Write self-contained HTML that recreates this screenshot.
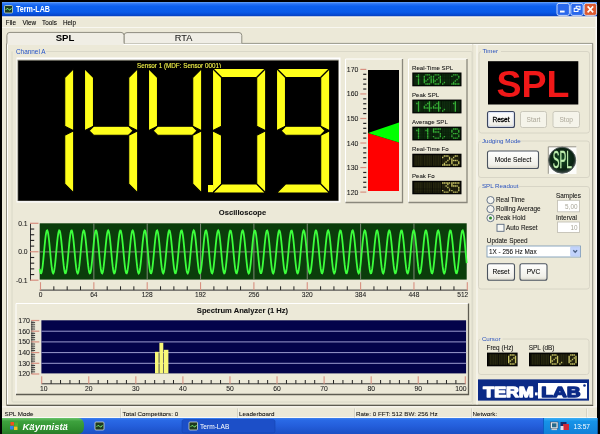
<!DOCTYPE html>
<html><head><meta charset="utf-8"><style>
html,body{margin:0;padding:0;width:600px;height:434px;overflow:hidden;background:#000}
svg{display:block;will-change:transform}
.t{stroke:#000;stroke-width:0.06}
</style></head><body>
<svg width="600" height="434" viewBox="0 0 600 434">
<rect x="0" y="0" width="600" height="434" fill="#000"/>
<rect x="2" y="2" width="595" height="416" fill="#ECE9D8"/>
<rect x="595.5" y="16" width="1.5" height="402" fill="#fbfaf6"/>
<defs>
<linearGradient id="tb" x1="0" y1="0" x2="0" y2="1">
<stop offset="0" stop-color="#6aa8fa"/><stop offset="0.12" stop-color="#2a74f4"/><stop offset="0.3" stop-color="#0d60ee"/>
<stop offset="0.7" stop-color="#0a5ae8"/><stop offset="0.9" stop-color="#0648d0"/><stop offset="1" stop-color="#0a3cb0"/></linearGradient>
<linearGradient id="task" x1="0" y1="0" x2="0" y2="1">
<stop offset="0" stop-color="#3f83f0"/><stop offset="0.12" stop-color="#2a6ae6"/>
<stop offset="0.5" stop-color="#245edb"/><stop offset="1" stop-color="#1b4fc4"/></linearGradient>
<linearGradient id="start" x1="0" y1="0" x2="0" y2="1">
<stop offset="0" stop-color="#6cc46c"/><stop offset="0.2" stop-color="#3ea23e"/>
<stop offset="0.7" stop-color="#2f8f2f"/><stop offset="1" stop-color="#2a7a2a"/></linearGradient>
<linearGradient id="tray" x1="0" y1="0" x2="0" y2="1">
<stop offset="0" stop-color="#3fb0f5"/><stop offset="0.2" stop-color="#1693e8"/>
<stop offset="1" stop-color="#1280d8"/></linearGradient>
<linearGradient id="btn" x1="0" y1="0" x2="0" y2="1">
<stop offset="0" stop-color="#ffffff"/><stop offset="0.8" stop-color="#f0efe8"/><stop offset="1" stop-color="#d8d5c8"/></linearGradient>
<linearGradient id="logo" x1="0" y1="0" x2="1" y2="1">
<stop offset="0" stop-color="#0c2b0c"/><stop offset="1" stop-color="#000"/></linearGradient>
</defs>
<rect x="2" y="2" width="595" height="14.5" fill="url(#tb)"/>
<rect x="2" y="16.5" width="595" height="1" fill="#fbfaf4"/>
<rect x="4.5" y="5.5" width="8" height="7.5" rx="1" fill="#1e3a1e" stroke="#c8d8c8" stroke-width="0.8"/>
<path d="M5.8 10 Q7 7 8.5 9.3 T11.4 8.2" stroke="#7fff7f" stroke-width="0.9" fill="none"/>
<text x="16" y="12.4" font-family='"Liberation Sans", sans-serif' font-weight="bold" font-size="8.4" fill="#fff" textLength="34" lengthAdjust="spacingAndGlyphs">Term-LAB</text>
<rect x="557" y="3.4" width="12.4" height="12" rx="2" fill="#2a68ec" stroke="#dfe8fb" stroke-width="0.9"/>
<rect x="560" y="10.6" width="4.6" height="1.9" fill="#fff"/>
<rect x="570.8" y="3.4" width="12.4" height="12" rx="2" fill="#2a68ec" stroke="#dfe8fb" stroke-width="0.9"/>
<rect x="576.1999999999999" y="6.3" width="3.8" height="3.2" fill="none" stroke="#fff" stroke-width="1"/>
<rect x="574.1999999999999" y="8.3" width="3.8" height="3.2" fill="#2a68ec" stroke="#fff" stroke-width="1"/>
<rect x="584.2" y="3.4" width="12.4" height="12" rx="2" fill="#dc5a30" stroke="#dfe8fb" stroke-width="0.9"/>
<path d="M587.6 6.4 L593.2 12.4 M593.2 6.4 L587.6 12.4" stroke="#fff" stroke-width="1.6"/>
<text x="5.8" y="24.8" font-family='"Liberation Sans", sans-serif' font-size="6.35" fill="#000" class="t">File</text>
<text x="22.5" y="24.8" font-family='"Liberation Sans", sans-serif' font-size="6.35" fill="#000" class="t">View</text>
<text x="42" y="24.8" font-family='"Liberation Sans", sans-serif' font-size="6.35" fill="#000" class="t">Tools</text>
<text x="63" y="24.8" font-family='"Liberation Sans", sans-serif' font-size="6.35" fill="#000" class="t">Help</text>
<path d="M6.5 405 V43.4 H592.7 V405 Z" fill="none" stroke="#8f8d80" stroke-width="1"/>
<path d="M7.5 404 V44.4 H591.7" fill="none" stroke="#fff" stroke-width="1"/>
<path d="M6.5 405.5 H593.2" stroke="#5e5c52" stroke-width="1.2"/>
<rect x="2" y="27" width="595" height="1" fill="#f8f7f0"/>
<path d="M124 43.4 V35.5 Q124 32.6 127 32.6 H239 Q241.8 32.6 241.8 35.5 V43.4" fill="#f0eee6" stroke="#8f8d80" stroke-width="1"/>
<path d="M6.9 43.4 V35.4 Q6.9 32.4 9.9 32.4 H121 Q124 32.4 124 35.4 V43.9" fill="#f0eee5" stroke="#8f8d80" stroke-width="1"/>
<rect x="7.4" y="42.8" width="116.1" height="2.2" fill="#f0eee5"/>
<text x="65" y="41.2" text-anchor="middle" font-family='"Liberation Sans", sans-serif' font-weight="bold" font-size="9.6" fill="#000">SPL</text>
<text x="183.5" y="40.9" text-anchor="middle" font-family='"Liberation Sans", sans-serif' font-size="9.2" fill="#222" class="t">RTA</text>
<path d="M472.8 44 V404.5" stroke="#dcd9ca" stroke-width="0.9"/>
<path d="M477 44 V404.5" stroke="#fdfcf8" stroke-width="1"/>
<path d="M12 51.5 V401 Q12 402 13 402 H471 Q472 402 472 401 V52.5 Q472 51.5 471 51.5 H46" fill="none" stroke="#d6d3c4" stroke-width="0.8"/>
<text x="16" y="54.2" font-family='"Liberation Sans", sans-serif' font-size="6.4" fill="#2050c8">Channel A</text>
<rect x="16.5" y="57.5" width="324" height="145" fill="#fff"/>
<rect x="17.3" y="59.6" width="321.5" height="141.5" fill="#a09e90"/>
<rect x="18.2" y="60.6" width="320.1" height="140.1" fill="#000"/>
<text x="179" y="67.7" text-anchor="middle" font-family='"Liberation Sans", sans-serif' font-size="6.3" fill="#f4f44a" stroke="#f4f44a" stroke-width="0.1">Sensor 1 (MDF: Sensor 0001)</text>
<polygon points="73.70,68.50 73.70,130.75 64.70,126.25 64.70,77.50" fill="#ffff1a" stroke="#000" stroke-width="1.1" stroke-linejoin="miter"/>
<polygon points="73.70,130.75 73.70,193.00 64.70,184.00 64.70,135.25" fill="#ffff1a" stroke="#000" stroke-width="1.1" stroke-linejoin="miter"/>
<polygon points="84.50,68.50 93.50,77.50 93.50,126.25 84.50,130.75" fill="#ffff1a" stroke="#000" stroke-width="1.1" stroke-linejoin="miter"/>
<polygon points="89.00,130.75 93.50,126.25 128.70,126.25 133.20,130.75 128.70,135.25 93.50,135.25" fill="#ffff1a" stroke="#000" stroke-width="1.1" stroke-linejoin="miter"/>
<polygon points="137.70,68.50 137.70,130.75 128.70,126.25 128.70,77.50" fill="#ffff1a" stroke="#000" stroke-width="1.1" stroke-linejoin="miter"/>
<polygon points="137.70,130.75 137.70,193.00 128.70,184.00 128.70,135.25" fill="#ffff1a" stroke="#000" stroke-width="1.1" stroke-linejoin="miter"/>
<polygon points="148.50,68.50 157.50,77.50 157.50,126.25 148.50,130.75" fill="#ffff1a" stroke="#000" stroke-width="1.1" stroke-linejoin="miter"/>
<polygon points="153.00,130.75 157.50,126.25 192.70,126.25 197.20,130.75 192.70,135.25 157.50,135.25" fill="#ffff1a" stroke="#000" stroke-width="1.1" stroke-linejoin="miter"/>
<polygon points="201.70,68.50 201.70,130.75 192.70,126.25 192.70,77.50" fill="#ffff1a" stroke="#000" stroke-width="1.1" stroke-linejoin="miter"/>
<polygon points="201.70,130.75 201.70,193.00 192.70,184.00 192.70,135.25" fill="#ffff1a" stroke="#000" stroke-width="1.1" stroke-linejoin="miter"/>
<polygon points="212.50,68.50 265.70,68.50 256.70,77.50 221.50,77.50" fill="#ffff1a" stroke="#000" stroke-width="1.1" stroke-linejoin="miter"/>
<polygon points="265.70,68.50 265.70,130.75 256.70,126.25 256.70,77.50" fill="#ffff1a" stroke="#000" stroke-width="1.1" stroke-linejoin="miter"/>
<polygon points="265.70,130.75 265.70,193.00 256.70,184.00 256.70,135.25" fill="#ffff1a" stroke="#000" stroke-width="1.1" stroke-linejoin="miter"/>
<polygon points="212.50,193.00 265.70,193.00 256.70,184.00 221.50,184.00" fill="#ffff1a" stroke="#000" stroke-width="1.1" stroke-linejoin="miter"/>
<polygon points="212.50,130.75 221.50,135.25 221.50,184.00 212.50,193.00" fill="#ffff1a" stroke="#000" stroke-width="1.1" stroke-linejoin="miter"/>
<polygon points="212.50,68.50 221.50,77.50 221.50,126.25 212.50,130.75" fill="#ffff1a" stroke="#000" stroke-width="1.1" stroke-linejoin="miter"/>
<polygon points="276.50,68.50 329.70,68.50 320.70,77.50 285.50,77.50" fill="#ffff1a" stroke="#000" stroke-width="1.1" stroke-linejoin="miter"/>
<polygon points="329.70,68.50 329.70,130.75 320.70,126.25 320.70,77.50" fill="#ffff1a" stroke="#000" stroke-width="1.1" stroke-linejoin="miter"/>
<polygon points="329.70,130.75 329.70,193.00 320.70,184.00 320.70,135.25" fill="#ffff1a" stroke="#000" stroke-width="1.1" stroke-linejoin="miter"/>
<polygon points="276.50,193.00 329.70,193.00 320.70,184.00 285.50,184.00" fill="#ffff1a" stroke="#000" stroke-width="1.1" stroke-linejoin="miter"/>
<polygon points="276.50,68.50 285.50,77.50 285.50,126.25 276.50,130.75" fill="#ffff1a" stroke="#000" stroke-width="1.1" stroke-linejoin="miter"/>
<polygon points="281.00,130.75 285.50,126.25 320.70,126.25 325.20,130.75 320.70,135.25 285.50,135.25" fill="#ffff1a" stroke="#000" stroke-width="1.1" stroke-linejoin="miter"/>
<rect x="208" y="185" width="5" height="7.2" fill="#ffff1a"/>
<rect x="345.5" y="59" width="57.0" height="143.5" fill="#ECE9D8"/>
<path d="M345.5 202.5 V59 H402.5" fill="none" stroke="#fff" stroke-width="1"/>
<path d="M345.5 202.5 H402.5 V59" fill="none" stroke="#8a887c" stroke-width="1.3"/>
<rect x="360.3" y="191.50" width="6" height="1.2" fill="#d89080"/>
<text x="358.3" y="194.60" text-anchor="end" font-family='"Liberation Sans", sans-serif' font-size="6.9" fill="#222" class="t">120</text>
<rect x="363.2" y="186.59" width="3.1" height="1.2" fill="#222"/>
<rect x="363.2" y="181.68" width="3.1" height="1.2" fill="#222"/>
<rect x="363.2" y="176.78" width="3.1" height="1.2" fill="#222"/>
<rect x="363.2" y="171.87" width="3.1" height="1.2" fill="#222"/>
<rect x="360.3" y="166.96" width="6" height="1.2" fill="#d89080"/>
<text x="358.3" y="170.06" text-anchor="end" font-family='"Liberation Sans", sans-serif' font-size="6.9" fill="#222" class="t">130</text>
<rect x="363.2" y="162.05" width="3.1" height="1.2" fill="#222"/>
<rect x="363.2" y="157.14" width="3.1" height="1.2" fill="#222"/>
<rect x="363.2" y="152.24" width="3.1" height="1.2" fill="#222"/>
<rect x="363.2" y="147.33" width="3.1" height="1.2" fill="#222"/>
<rect x="360.3" y="142.42" width="6" height="1.2" fill="#d89080"/>
<text x="358.3" y="145.52" text-anchor="end" font-family='"Liberation Sans", sans-serif' font-size="6.9" fill="#222" class="t">140</text>
<rect x="363.2" y="137.51" width="3.1" height="1.2" fill="#222"/>
<rect x="363.2" y="132.60" width="3.1" height="1.2" fill="#222"/>
<rect x="363.2" y="127.70" width="3.1" height="1.2" fill="#222"/>
<rect x="363.2" y="122.79" width="3.1" height="1.2" fill="#222"/>
<rect x="360.3" y="117.88" width="6" height="1.2" fill="#d89080"/>
<text x="358.3" y="120.98" text-anchor="end" font-family='"Liberation Sans", sans-serif' font-size="6.9" fill="#222" class="t">150</text>
<rect x="363.2" y="112.97" width="3.1" height="1.2" fill="#222"/>
<rect x="363.2" y="108.06" width="3.1" height="1.2" fill="#222"/>
<rect x="363.2" y="103.16" width="3.1" height="1.2" fill="#222"/>
<rect x="363.2" y="98.25" width="3.1" height="1.2" fill="#222"/>
<rect x="360.3" y="93.34" width="6" height="1.2" fill="#d89080"/>
<text x="358.3" y="96.44" text-anchor="end" font-family='"Liberation Sans", sans-serif' font-size="6.9" fill="#222" class="t">160</text>
<rect x="363.2" y="88.43" width="3.1" height="1.2" fill="#222"/>
<rect x="363.2" y="83.52" width="3.1" height="1.2" fill="#222"/>
<rect x="363.2" y="78.62" width="3.1" height="1.2" fill="#222"/>
<rect x="363.2" y="73.71" width="3.1" height="1.2" fill="#222"/>
<rect x="360.3" y="68.80" width="6" height="1.2" fill="#d89080"/>
<text x="358.3" y="71.90" text-anchor="end" font-family='"Liberation Sans", sans-serif' font-size="6.9" fill="#222" class="t">170</text>
<rect x="368" y="70" width="31" height="121" fill="#000"/>
<polygon points="368,133 399,142.6 399,191 368,191" fill="#ff0000"/>
<polygon points="368,133 399,122.5 399,142.6" fill="#00ff00"/>
<rect x="408.5" y="59" width="58.5" height="143.5" fill="#ECE9D8"/>
<path d="M408.5 202.5 V59 H467" fill="none" stroke="#fff" stroke-width="1"/>
<path d="M408.5 202.5 H467 V59" fill="none" stroke="#8a887c" stroke-width="1.3"/>
<text x="412" y="69.80" font-family='"Liberation Sans", sans-serif' font-size="6.1" fill="#111" class="t">Real-Time SPL</text>
<rect x="412.3" y="72.5" width="49.2" height="13.8" fill="#000"/>
<rect x="413.3" y="73.5" width="47.2" height="11.8" fill="#061806"/>
<path d="M414.40 74.18h1.4v1.4h-1.4zM416.12 74.18h1.4v1.4h-1.4zM419.56 74.18h1.4v1.4h-1.4zM421.28 74.18h1.4v1.4h-1.4zM414.40 75.70h1.4v1.4h-1.4zM419.56 75.70h1.4v1.4h-1.4zM421.28 75.70h1.4v1.4h-1.4zM414.40 77.22h1.4v1.4h-1.4zM416.12 77.22h1.4v1.4h-1.4zM419.56 77.22h1.4v1.4h-1.4zM421.28 77.22h1.4v1.4h-1.4zM414.40 78.74h1.4v1.4h-1.4zM416.12 78.74h1.4v1.4h-1.4zM419.56 78.74h1.4v1.4h-1.4zM421.28 78.74h1.4v1.4h-1.4zM414.40 80.26h1.4v1.4h-1.4zM416.12 80.26h1.4v1.4h-1.4zM419.56 80.26h1.4v1.4h-1.4zM421.28 80.26h1.4v1.4h-1.4zM414.40 81.78h1.4v1.4h-1.4zM416.12 81.78h1.4v1.4h-1.4zM419.56 81.78h1.4v1.4h-1.4zM421.28 81.78h1.4v1.4h-1.4zM414.40 83.30h1.4v1.4h-1.4zM416.12 83.30h1.4v1.4h-1.4zM419.56 83.30h1.4v1.4h-1.4zM421.28 83.30h1.4v1.4h-1.4zM423.60 74.18h1.4v1.4h-1.4zM430.48 74.18h1.4v1.4h-1.4zM425.32 75.70h1.4v1.4h-1.4zM427.04 75.70h1.4v1.4h-1.4zM428.76 75.70h1.4v1.4h-1.4zM425.32 77.22h1.4v1.4h-1.4zM427.04 77.22h1.4v1.4h-1.4zM425.32 78.74h1.4v1.4h-1.4zM428.76 78.74h1.4v1.4h-1.4zM427.04 80.26h1.4v1.4h-1.4zM428.76 80.26h1.4v1.4h-1.4zM425.32 81.78h1.4v1.4h-1.4zM427.04 81.78h1.4v1.4h-1.4zM428.76 81.78h1.4v1.4h-1.4zM423.60 83.30h1.4v1.4h-1.4zM430.48 83.30h1.4v1.4h-1.4zM432.80 74.18h1.4v1.4h-1.4zM439.68 74.18h1.4v1.4h-1.4zM434.52 75.70h1.4v1.4h-1.4zM436.24 75.70h1.4v1.4h-1.4zM437.96 75.70h1.4v1.4h-1.4zM434.52 77.22h1.4v1.4h-1.4zM436.24 77.22h1.4v1.4h-1.4zM434.52 78.74h1.4v1.4h-1.4zM437.96 78.74h1.4v1.4h-1.4zM436.24 80.26h1.4v1.4h-1.4zM437.96 80.26h1.4v1.4h-1.4zM434.52 81.78h1.4v1.4h-1.4zM436.24 81.78h1.4v1.4h-1.4zM437.96 81.78h1.4v1.4h-1.4zM432.80 83.30h1.4v1.4h-1.4zM439.68 83.30h1.4v1.4h-1.4zM442.00 74.18h1.4v1.4h-1.4zM443.72 74.18h1.4v1.4h-1.4zM445.44 74.18h1.4v1.4h-1.4zM447.16 74.18h1.4v1.4h-1.4zM448.88 74.18h1.4v1.4h-1.4zM442.00 75.70h1.4v1.4h-1.4zM443.72 75.70h1.4v1.4h-1.4zM445.44 75.70h1.4v1.4h-1.4zM447.16 75.70h1.4v1.4h-1.4zM448.88 75.70h1.4v1.4h-1.4zM442.00 77.22h1.4v1.4h-1.4zM443.72 77.22h1.4v1.4h-1.4zM445.44 77.22h1.4v1.4h-1.4zM447.16 77.22h1.4v1.4h-1.4zM448.88 77.22h1.4v1.4h-1.4zM442.00 78.74h1.4v1.4h-1.4zM443.72 78.74h1.4v1.4h-1.4zM445.44 78.74h1.4v1.4h-1.4zM447.16 78.74h1.4v1.4h-1.4zM448.88 78.74h1.4v1.4h-1.4zM442.00 80.26h1.4v1.4h-1.4zM443.72 80.26h1.4v1.4h-1.4zM445.44 80.26h1.4v1.4h-1.4zM447.16 80.26h1.4v1.4h-1.4zM448.88 80.26h1.4v1.4h-1.4zM442.00 81.78h1.4v1.4h-1.4zM445.44 81.78h1.4v1.4h-1.4zM447.16 81.78h1.4v1.4h-1.4zM448.88 81.78h1.4v1.4h-1.4zM443.72 83.30h1.4v1.4h-1.4zM445.44 83.30h1.4v1.4h-1.4zM447.16 83.30h1.4v1.4h-1.4zM448.88 83.30h1.4v1.4h-1.4zM451.20 74.18h1.4v1.4h-1.4zM458.08 74.18h1.4v1.4h-1.4zM452.92 75.70h1.4v1.4h-1.4zM454.64 75.70h1.4v1.4h-1.4zM456.36 75.70h1.4v1.4h-1.4zM451.20 77.22h1.4v1.4h-1.4zM452.92 77.22h1.4v1.4h-1.4zM454.64 77.22h1.4v1.4h-1.4zM456.36 77.22h1.4v1.4h-1.4zM451.20 78.74h1.4v1.4h-1.4zM452.92 78.74h1.4v1.4h-1.4zM454.64 78.74h1.4v1.4h-1.4zM458.08 78.74h1.4v1.4h-1.4zM451.20 80.26h1.4v1.4h-1.4zM452.92 80.26h1.4v1.4h-1.4zM456.36 80.26h1.4v1.4h-1.4zM458.08 80.26h1.4v1.4h-1.4zM451.20 81.78h1.4v1.4h-1.4zM454.64 81.78h1.4v1.4h-1.4zM456.36 81.78h1.4v1.4h-1.4zM458.08 81.78h1.4v1.4h-1.4z" fill="#0f2c0f"/>
<path d="M417.84 74.18h1.4v1.4h-1.4zM416.12 75.70h1.4v1.4h-1.4zM417.84 75.70h1.4v1.4h-1.4zM417.84 77.22h1.4v1.4h-1.4zM417.84 78.74h1.4v1.4h-1.4zM417.84 80.26h1.4v1.4h-1.4zM417.84 81.78h1.4v1.4h-1.4zM417.84 83.30h1.4v1.4h-1.4zM425.32 74.18h1.4v1.4h-1.4zM427.04 74.18h1.4v1.4h-1.4zM428.76 74.18h1.4v1.4h-1.4zM423.60 75.70h1.4v1.4h-1.4zM430.48 75.70h1.4v1.4h-1.4zM423.60 77.22h1.4v1.4h-1.4zM428.76 77.22h1.4v1.4h-1.4zM430.48 77.22h1.4v1.4h-1.4zM423.60 78.74h1.4v1.4h-1.4zM427.04 78.74h1.4v1.4h-1.4zM430.48 78.74h1.4v1.4h-1.4zM423.60 80.26h1.4v1.4h-1.4zM425.32 80.26h1.4v1.4h-1.4zM430.48 80.26h1.4v1.4h-1.4zM423.60 81.78h1.4v1.4h-1.4zM430.48 81.78h1.4v1.4h-1.4zM425.32 83.30h1.4v1.4h-1.4zM427.04 83.30h1.4v1.4h-1.4zM428.76 83.30h1.4v1.4h-1.4zM434.52 74.18h1.4v1.4h-1.4zM436.24 74.18h1.4v1.4h-1.4zM437.96 74.18h1.4v1.4h-1.4zM432.80 75.70h1.4v1.4h-1.4zM439.68 75.70h1.4v1.4h-1.4zM432.80 77.22h1.4v1.4h-1.4zM437.96 77.22h1.4v1.4h-1.4zM439.68 77.22h1.4v1.4h-1.4zM432.80 78.74h1.4v1.4h-1.4zM436.24 78.74h1.4v1.4h-1.4zM439.68 78.74h1.4v1.4h-1.4zM432.80 80.26h1.4v1.4h-1.4zM434.52 80.26h1.4v1.4h-1.4zM439.68 80.26h1.4v1.4h-1.4zM432.80 81.78h1.4v1.4h-1.4zM439.68 81.78h1.4v1.4h-1.4zM434.52 83.30h1.4v1.4h-1.4zM436.24 83.30h1.4v1.4h-1.4zM437.96 83.30h1.4v1.4h-1.4zM443.72 81.78h1.4v1.4h-1.4zM442.00 83.30h1.4v1.4h-1.4zM452.92 74.18h1.4v1.4h-1.4zM454.64 74.18h1.4v1.4h-1.4zM456.36 74.18h1.4v1.4h-1.4zM451.20 75.70h1.4v1.4h-1.4zM458.08 75.70h1.4v1.4h-1.4zM458.08 77.22h1.4v1.4h-1.4zM456.36 78.74h1.4v1.4h-1.4zM454.64 80.26h1.4v1.4h-1.4zM452.92 81.78h1.4v1.4h-1.4zM451.20 83.30h1.4v1.4h-1.4zM452.92 83.30h1.4v1.4h-1.4zM454.64 83.30h1.4v1.4h-1.4zM456.36 83.30h1.4v1.4h-1.4zM458.08 83.30h1.4v1.4h-1.4z" fill="#36b036"/>
<text x="412" y="96.87" font-family='"Liberation Sans", sans-serif' font-size="6.1" fill="#111" class="t">Peak SPL</text>
<rect x="412.3" y="99.57" width="49.2" height="13.8" fill="#000"/>
<rect x="413.3" y="100.57" width="47.2" height="11.8" fill="#061806"/>
<path d="M414.40 101.25h1.4v1.4h-1.4zM416.12 101.25h1.4v1.4h-1.4zM419.56 101.25h1.4v1.4h-1.4zM421.28 101.25h1.4v1.4h-1.4zM414.40 102.77h1.4v1.4h-1.4zM419.56 102.77h1.4v1.4h-1.4zM421.28 102.77h1.4v1.4h-1.4zM414.40 104.29h1.4v1.4h-1.4zM416.12 104.29h1.4v1.4h-1.4zM419.56 104.29h1.4v1.4h-1.4zM421.28 104.29h1.4v1.4h-1.4zM414.40 105.81h1.4v1.4h-1.4zM416.12 105.81h1.4v1.4h-1.4zM419.56 105.81h1.4v1.4h-1.4zM421.28 105.81h1.4v1.4h-1.4zM414.40 107.33h1.4v1.4h-1.4zM416.12 107.33h1.4v1.4h-1.4zM419.56 107.33h1.4v1.4h-1.4zM421.28 107.33h1.4v1.4h-1.4zM414.40 108.85h1.4v1.4h-1.4zM416.12 108.85h1.4v1.4h-1.4zM419.56 108.85h1.4v1.4h-1.4zM421.28 108.85h1.4v1.4h-1.4zM414.40 110.37h1.4v1.4h-1.4zM416.12 110.37h1.4v1.4h-1.4zM419.56 110.37h1.4v1.4h-1.4zM421.28 110.37h1.4v1.4h-1.4zM423.60 101.25h1.4v1.4h-1.4zM425.32 101.25h1.4v1.4h-1.4zM427.04 101.25h1.4v1.4h-1.4zM430.48 101.25h1.4v1.4h-1.4zM423.60 102.77h1.4v1.4h-1.4zM425.32 102.77h1.4v1.4h-1.4zM430.48 102.77h1.4v1.4h-1.4zM423.60 104.29h1.4v1.4h-1.4zM427.04 104.29h1.4v1.4h-1.4zM430.48 104.29h1.4v1.4h-1.4zM425.32 105.81h1.4v1.4h-1.4zM427.04 105.81h1.4v1.4h-1.4zM430.48 105.81h1.4v1.4h-1.4zM423.60 108.85h1.4v1.4h-1.4zM425.32 108.85h1.4v1.4h-1.4zM427.04 108.85h1.4v1.4h-1.4zM430.48 108.85h1.4v1.4h-1.4zM423.60 110.37h1.4v1.4h-1.4zM425.32 110.37h1.4v1.4h-1.4zM427.04 110.37h1.4v1.4h-1.4zM430.48 110.37h1.4v1.4h-1.4zM432.80 101.25h1.4v1.4h-1.4zM434.52 101.25h1.4v1.4h-1.4zM436.24 101.25h1.4v1.4h-1.4zM439.68 101.25h1.4v1.4h-1.4zM432.80 102.77h1.4v1.4h-1.4zM434.52 102.77h1.4v1.4h-1.4zM439.68 102.77h1.4v1.4h-1.4zM432.80 104.29h1.4v1.4h-1.4zM436.24 104.29h1.4v1.4h-1.4zM439.68 104.29h1.4v1.4h-1.4zM434.52 105.81h1.4v1.4h-1.4zM436.24 105.81h1.4v1.4h-1.4zM439.68 105.81h1.4v1.4h-1.4zM432.80 108.85h1.4v1.4h-1.4zM434.52 108.85h1.4v1.4h-1.4zM436.24 108.85h1.4v1.4h-1.4zM439.68 108.85h1.4v1.4h-1.4zM432.80 110.37h1.4v1.4h-1.4zM434.52 110.37h1.4v1.4h-1.4zM436.24 110.37h1.4v1.4h-1.4zM439.68 110.37h1.4v1.4h-1.4zM442.00 101.25h1.4v1.4h-1.4zM443.72 101.25h1.4v1.4h-1.4zM445.44 101.25h1.4v1.4h-1.4zM447.16 101.25h1.4v1.4h-1.4zM448.88 101.25h1.4v1.4h-1.4zM442.00 102.77h1.4v1.4h-1.4zM443.72 102.77h1.4v1.4h-1.4zM445.44 102.77h1.4v1.4h-1.4zM447.16 102.77h1.4v1.4h-1.4zM448.88 102.77h1.4v1.4h-1.4zM442.00 104.29h1.4v1.4h-1.4zM443.72 104.29h1.4v1.4h-1.4zM445.44 104.29h1.4v1.4h-1.4zM447.16 104.29h1.4v1.4h-1.4zM448.88 104.29h1.4v1.4h-1.4zM442.00 105.81h1.4v1.4h-1.4zM443.72 105.81h1.4v1.4h-1.4zM445.44 105.81h1.4v1.4h-1.4zM447.16 105.81h1.4v1.4h-1.4zM448.88 105.81h1.4v1.4h-1.4zM442.00 107.33h1.4v1.4h-1.4zM443.72 107.33h1.4v1.4h-1.4zM445.44 107.33h1.4v1.4h-1.4zM447.16 107.33h1.4v1.4h-1.4zM448.88 107.33h1.4v1.4h-1.4zM442.00 108.85h1.4v1.4h-1.4zM445.44 108.85h1.4v1.4h-1.4zM447.16 108.85h1.4v1.4h-1.4zM448.88 108.85h1.4v1.4h-1.4zM443.72 110.37h1.4v1.4h-1.4zM445.44 110.37h1.4v1.4h-1.4zM447.16 110.37h1.4v1.4h-1.4zM448.88 110.37h1.4v1.4h-1.4zM451.20 101.25h1.4v1.4h-1.4zM452.92 101.25h1.4v1.4h-1.4zM456.36 101.25h1.4v1.4h-1.4zM458.08 101.25h1.4v1.4h-1.4zM451.20 102.77h1.4v1.4h-1.4zM456.36 102.77h1.4v1.4h-1.4zM458.08 102.77h1.4v1.4h-1.4zM451.20 104.29h1.4v1.4h-1.4zM452.92 104.29h1.4v1.4h-1.4zM456.36 104.29h1.4v1.4h-1.4zM458.08 104.29h1.4v1.4h-1.4zM451.20 105.81h1.4v1.4h-1.4zM452.92 105.81h1.4v1.4h-1.4zM456.36 105.81h1.4v1.4h-1.4zM458.08 105.81h1.4v1.4h-1.4zM451.20 107.33h1.4v1.4h-1.4zM452.92 107.33h1.4v1.4h-1.4zM456.36 107.33h1.4v1.4h-1.4zM458.08 107.33h1.4v1.4h-1.4zM451.20 108.85h1.4v1.4h-1.4zM452.92 108.85h1.4v1.4h-1.4zM456.36 108.85h1.4v1.4h-1.4zM458.08 108.85h1.4v1.4h-1.4zM451.20 110.37h1.4v1.4h-1.4zM452.92 110.37h1.4v1.4h-1.4zM456.36 110.37h1.4v1.4h-1.4zM458.08 110.37h1.4v1.4h-1.4z" fill="#0f2c0f"/>
<path d="M417.84 101.25h1.4v1.4h-1.4zM416.12 102.77h1.4v1.4h-1.4zM417.84 102.77h1.4v1.4h-1.4zM417.84 104.29h1.4v1.4h-1.4zM417.84 105.81h1.4v1.4h-1.4zM417.84 107.33h1.4v1.4h-1.4zM417.84 108.85h1.4v1.4h-1.4zM417.84 110.37h1.4v1.4h-1.4zM428.76 101.25h1.4v1.4h-1.4zM427.04 102.77h1.4v1.4h-1.4zM428.76 102.77h1.4v1.4h-1.4zM425.32 104.29h1.4v1.4h-1.4zM428.76 104.29h1.4v1.4h-1.4zM423.60 105.81h1.4v1.4h-1.4zM428.76 105.81h1.4v1.4h-1.4zM423.60 107.33h1.4v1.4h-1.4zM425.32 107.33h1.4v1.4h-1.4zM427.04 107.33h1.4v1.4h-1.4zM428.76 107.33h1.4v1.4h-1.4zM430.48 107.33h1.4v1.4h-1.4zM428.76 108.85h1.4v1.4h-1.4zM428.76 110.37h1.4v1.4h-1.4zM437.96 101.25h1.4v1.4h-1.4zM436.24 102.77h1.4v1.4h-1.4zM437.96 102.77h1.4v1.4h-1.4zM434.52 104.29h1.4v1.4h-1.4zM437.96 104.29h1.4v1.4h-1.4zM432.80 105.81h1.4v1.4h-1.4zM437.96 105.81h1.4v1.4h-1.4zM432.80 107.33h1.4v1.4h-1.4zM434.52 107.33h1.4v1.4h-1.4zM436.24 107.33h1.4v1.4h-1.4zM437.96 107.33h1.4v1.4h-1.4zM439.68 107.33h1.4v1.4h-1.4zM437.96 108.85h1.4v1.4h-1.4zM437.96 110.37h1.4v1.4h-1.4zM443.72 108.85h1.4v1.4h-1.4zM442.00 110.37h1.4v1.4h-1.4zM454.64 101.25h1.4v1.4h-1.4zM452.92 102.77h1.4v1.4h-1.4zM454.64 102.77h1.4v1.4h-1.4zM454.64 104.29h1.4v1.4h-1.4zM454.64 105.81h1.4v1.4h-1.4zM454.64 107.33h1.4v1.4h-1.4zM454.64 108.85h1.4v1.4h-1.4zM454.64 110.37h1.4v1.4h-1.4z" fill="#36b036"/>
<text x="412" y="123.94" font-family='"Liberation Sans", sans-serif' font-size="6.1" fill="#111" class="t">Average SPL</text>
<rect x="412.3" y="126.64" width="49.2" height="13.8" fill="#000"/>
<rect x="413.3" y="127.64" width="47.2" height="11.8" fill="#061806"/>
<path d="M414.40 128.32h1.4v1.4h-1.4zM416.12 128.32h1.4v1.4h-1.4zM419.56 128.32h1.4v1.4h-1.4zM421.28 128.32h1.4v1.4h-1.4zM414.40 129.84h1.4v1.4h-1.4zM419.56 129.84h1.4v1.4h-1.4zM421.28 129.84h1.4v1.4h-1.4zM414.40 131.36h1.4v1.4h-1.4zM416.12 131.36h1.4v1.4h-1.4zM419.56 131.36h1.4v1.4h-1.4zM421.28 131.36h1.4v1.4h-1.4zM414.40 132.88h1.4v1.4h-1.4zM416.12 132.88h1.4v1.4h-1.4zM419.56 132.88h1.4v1.4h-1.4zM421.28 132.88h1.4v1.4h-1.4zM414.40 134.40h1.4v1.4h-1.4zM416.12 134.40h1.4v1.4h-1.4zM419.56 134.40h1.4v1.4h-1.4zM421.28 134.40h1.4v1.4h-1.4zM414.40 135.92h1.4v1.4h-1.4zM416.12 135.92h1.4v1.4h-1.4zM419.56 135.92h1.4v1.4h-1.4zM421.28 135.92h1.4v1.4h-1.4zM414.40 137.44h1.4v1.4h-1.4zM416.12 137.44h1.4v1.4h-1.4zM419.56 137.44h1.4v1.4h-1.4zM421.28 137.44h1.4v1.4h-1.4zM423.60 128.32h1.4v1.4h-1.4zM425.32 128.32h1.4v1.4h-1.4zM428.76 128.32h1.4v1.4h-1.4zM430.48 128.32h1.4v1.4h-1.4zM423.60 129.84h1.4v1.4h-1.4zM428.76 129.84h1.4v1.4h-1.4zM430.48 129.84h1.4v1.4h-1.4zM423.60 131.36h1.4v1.4h-1.4zM425.32 131.36h1.4v1.4h-1.4zM428.76 131.36h1.4v1.4h-1.4zM430.48 131.36h1.4v1.4h-1.4zM423.60 132.88h1.4v1.4h-1.4zM425.32 132.88h1.4v1.4h-1.4zM428.76 132.88h1.4v1.4h-1.4zM430.48 132.88h1.4v1.4h-1.4zM423.60 134.40h1.4v1.4h-1.4zM425.32 134.40h1.4v1.4h-1.4zM428.76 134.40h1.4v1.4h-1.4zM430.48 134.40h1.4v1.4h-1.4zM423.60 135.92h1.4v1.4h-1.4zM425.32 135.92h1.4v1.4h-1.4zM428.76 135.92h1.4v1.4h-1.4zM430.48 135.92h1.4v1.4h-1.4zM423.60 137.44h1.4v1.4h-1.4zM425.32 137.44h1.4v1.4h-1.4zM428.76 137.44h1.4v1.4h-1.4zM430.48 137.44h1.4v1.4h-1.4zM434.52 129.84h1.4v1.4h-1.4zM436.24 129.84h1.4v1.4h-1.4zM437.96 129.84h1.4v1.4h-1.4zM439.68 129.84h1.4v1.4h-1.4zM439.68 131.36h1.4v1.4h-1.4zM432.80 132.88h1.4v1.4h-1.4zM434.52 132.88h1.4v1.4h-1.4zM436.24 132.88h1.4v1.4h-1.4zM437.96 132.88h1.4v1.4h-1.4zM432.80 134.40h1.4v1.4h-1.4zM434.52 134.40h1.4v1.4h-1.4zM436.24 134.40h1.4v1.4h-1.4zM437.96 134.40h1.4v1.4h-1.4zM434.52 135.92h1.4v1.4h-1.4zM436.24 135.92h1.4v1.4h-1.4zM437.96 135.92h1.4v1.4h-1.4zM432.80 137.44h1.4v1.4h-1.4zM439.68 137.44h1.4v1.4h-1.4zM442.00 128.32h1.4v1.4h-1.4zM443.72 128.32h1.4v1.4h-1.4zM445.44 128.32h1.4v1.4h-1.4zM447.16 128.32h1.4v1.4h-1.4zM448.88 128.32h1.4v1.4h-1.4zM442.00 129.84h1.4v1.4h-1.4zM443.72 129.84h1.4v1.4h-1.4zM445.44 129.84h1.4v1.4h-1.4zM447.16 129.84h1.4v1.4h-1.4zM448.88 129.84h1.4v1.4h-1.4zM442.00 131.36h1.4v1.4h-1.4zM443.72 131.36h1.4v1.4h-1.4zM445.44 131.36h1.4v1.4h-1.4zM447.16 131.36h1.4v1.4h-1.4zM448.88 131.36h1.4v1.4h-1.4zM442.00 132.88h1.4v1.4h-1.4zM443.72 132.88h1.4v1.4h-1.4zM445.44 132.88h1.4v1.4h-1.4zM447.16 132.88h1.4v1.4h-1.4zM448.88 132.88h1.4v1.4h-1.4zM442.00 134.40h1.4v1.4h-1.4zM443.72 134.40h1.4v1.4h-1.4zM445.44 134.40h1.4v1.4h-1.4zM447.16 134.40h1.4v1.4h-1.4zM448.88 134.40h1.4v1.4h-1.4zM442.00 135.92h1.4v1.4h-1.4zM445.44 135.92h1.4v1.4h-1.4zM447.16 135.92h1.4v1.4h-1.4zM448.88 135.92h1.4v1.4h-1.4zM443.72 137.44h1.4v1.4h-1.4zM445.44 137.44h1.4v1.4h-1.4zM447.16 137.44h1.4v1.4h-1.4zM448.88 137.44h1.4v1.4h-1.4zM451.20 128.32h1.4v1.4h-1.4zM458.08 128.32h1.4v1.4h-1.4zM452.92 129.84h1.4v1.4h-1.4zM454.64 129.84h1.4v1.4h-1.4zM456.36 129.84h1.4v1.4h-1.4zM452.92 131.36h1.4v1.4h-1.4zM454.64 131.36h1.4v1.4h-1.4zM456.36 131.36h1.4v1.4h-1.4zM451.20 132.88h1.4v1.4h-1.4zM458.08 132.88h1.4v1.4h-1.4zM452.92 134.40h1.4v1.4h-1.4zM454.64 134.40h1.4v1.4h-1.4zM456.36 134.40h1.4v1.4h-1.4zM452.92 135.92h1.4v1.4h-1.4zM454.64 135.92h1.4v1.4h-1.4zM456.36 135.92h1.4v1.4h-1.4zM451.20 137.44h1.4v1.4h-1.4zM458.08 137.44h1.4v1.4h-1.4z" fill="#0f2c0f"/>
<path d="M417.84 128.32h1.4v1.4h-1.4zM416.12 129.84h1.4v1.4h-1.4zM417.84 129.84h1.4v1.4h-1.4zM417.84 131.36h1.4v1.4h-1.4zM417.84 132.88h1.4v1.4h-1.4zM417.84 134.40h1.4v1.4h-1.4zM417.84 135.92h1.4v1.4h-1.4zM417.84 137.44h1.4v1.4h-1.4zM427.04 128.32h1.4v1.4h-1.4zM425.32 129.84h1.4v1.4h-1.4zM427.04 129.84h1.4v1.4h-1.4zM427.04 131.36h1.4v1.4h-1.4zM427.04 132.88h1.4v1.4h-1.4zM427.04 134.40h1.4v1.4h-1.4zM427.04 135.92h1.4v1.4h-1.4zM427.04 137.44h1.4v1.4h-1.4zM432.80 128.32h1.4v1.4h-1.4zM434.52 128.32h1.4v1.4h-1.4zM436.24 128.32h1.4v1.4h-1.4zM437.96 128.32h1.4v1.4h-1.4zM439.68 128.32h1.4v1.4h-1.4zM432.80 129.84h1.4v1.4h-1.4zM432.80 131.36h1.4v1.4h-1.4zM434.52 131.36h1.4v1.4h-1.4zM436.24 131.36h1.4v1.4h-1.4zM437.96 131.36h1.4v1.4h-1.4zM439.68 132.88h1.4v1.4h-1.4zM439.68 134.40h1.4v1.4h-1.4zM432.80 135.92h1.4v1.4h-1.4zM439.68 135.92h1.4v1.4h-1.4zM434.52 137.44h1.4v1.4h-1.4zM436.24 137.44h1.4v1.4h-1.4zM437.96 137.44h1.4v1.4h-1.4zM443.72 135.92h1.4v1.4h-1.4zM442.00 137.44h1.4v1.4h-1.4zM452.92 128.32h1.4v1.4h-1.4zM454.64 128.32h1.4v1.4h-1.4zM456.36 128.32h1.4v1.4h-1.4zM451.20 129.84h1.4v1.4h-1.4zM458.08 129.84h1.4v1.4h-1.4zM451.20 131.36h1.4v1.4h-1.4zM458.08 131.36h1.4v1.4h-1.4zM452.92 132.88h1.4v1.4h-1.4zM454.64 132.88h1.4v1.4h-1.4zM456.36 132.88h1.4v1.4h-1.4zM451.20 134.40h1.4v1.4h-1.4zM458.08 134.40h1.4v1.4h-1.4zM451.20 135.92h1.4v1.4h-1.4zM458.08 135.92h1.4v1.4h-1.4zM452.92 137.44h1.4v1.4h-1.4zM454.64 137.44h1.4v1.4h-1.4zM456.36 137.44h1.4v1.4h-1.4z" fill="#36b036"/>
<text x="412" y="151.01" font-family='"Liberation Sans", sans-serif' font-size="6.1" fill="#111" class="t">Real-Time Fo</text>
<rect x="412.3" y="153.71" width="49.2" height="13.5" fill="#000"/>
<rect x="413.3" y="154.71" width="47.2" height="11.5" fill="#0b0b05"/>
<path d="M414.40 155.24h1.4v1.4h-1.4zM416.12 155.24h1.4v1.4h-1.4zM417.84 155.24h1.4v1.4h-1.4zM419.56 155.24h1.4v1.4h-1.4zM421.28 155.24h1.4v1.4h-1.4zM414.40 156.76h1.4v1.4h-1.4zM416.12 156.76h1.4v1.4h-1.4zM417.84 156.76h1.4v1.4h-1.4zM419.56 156.76h1.4v1.4h-1.4zM421.28 156.76h1.4v1.4h-1.4zM414.40 158.28h1.4v1.4h-1.4zM416.12 158.28h1.4v1.4h-1.4zM417.84 158.28h1.4v1.4h-1.4zM419.56 158.28h1.4v1.4h-1.4zM421.28 158.28h1.4v1.4h-1.4zM414.40 159.80h1.4v1.4h-1.4zM416.12 159.80h1.4v1.4h-1.4zM417.84 159.80h1.4v1.4h-1.4zM419.56 159.80h1.4v1.4h-1.4zM421.28 159.80h1.4v1.4h-1.4zM414.40 161.32h1.4v1.4h-1.4zM416.12 161.32h1.4v1.4h-1.4zM417.84 161.32h1.4v1.4h-1.4zM419.56 161.32h1.4v1.4h-1.4zM421.28 161.32h1.4v1.4h-1.4zM414.40 162.84h1.4v1.4h-1.4zM416.12 162.84h1.4v1.4h-1.4zM417.84 162.84h1.4v1.4h-1.4zM419.56 162.84h1.4v1.4h-1.4zM421.28 162.84h1.4v1.4h-1.4zM414.40 164.36h1.4v1.4h-1.4zM416.12 164.36h1.4v1.4h-1.4zM417.84 164.36h1.4v1.4h-1.4zM419.56 164.36h1.4v1.4h-1.4zM421.28 164.36h1.4v1.4h-1.4zM423.60 155.24h1.4v1.4h-1.4zM425.32 155.24h1.4v1.4h-1.4zM427.04 155.24h1.4v1.4h-1.4zM428.76 155.24h1.4v1.4h-1.4zM430.48 155.24h1.4v1.4h-1.4zM423.60 156.76h1.4v1.4h-1.4zM425.32 156.76h1.4v1.4h-1.4zM427.04 156.76h1.4v1.4h-1.4zM428.76 156.76h1.4v1.4h-1.4zM430.48 156.76h1.4v1.4h-1.4zM423.60 158.28h1.4v1.4h-1.4zM425.32 158.28h1.4v1.4h-1.4zM427.04 158.28h1.4v1.4h-1.4zM428.76 158.28h1.4v1.4h-1.4zM430.48 158.28h1.4v1.4h-1.4zM423.60 159.80h1.4v1.4h-1.4zM425.32 159.80h1.4v1.4h-1.4zM427.04 159.80h1.4v1.4h-1.4zM428.76 159.80h1.4v1.4h-1.4zM430.48 159.80h1.4v1.4h-1.4zM423.60 161.32h1.4v1.4h-1.4zM425.32 161.32h1.4v1.4h-1.4zM427.04 161.32h1.4v1.4h-1.4zM428.76 161.32h1.4v1.4h-1.4zM430.48 161.32h1.4v1.4h-1.4zM423.60 162.84h1.4v1.4h-1.4zM425.32 162.84h1.4v1.4h-1.4zM427.04 162.84h1.4v1.4h-1.4zM428.76 162.84h1.4v1.4h-1.4zM430.48 162.84h1.4v1.4h-1.4zM423.60 164.36h1.4v1.4h-1.4zM425.32 164.36h1.4v1.4h-1.4zM427.04 164.36h1.4v1.4h-1.4zM428.76 164.36h1.4v1.4h-1.4zM430.48 164.36h1.4v1.4h-1.4zM432.80 155.24h1.4v1.4h-1.4zM434.52 155.24h1.4v1.4h-1.4zM436.24 155.24h1.4v1.4h-1.4zM437.96 155.24h1.4v1.4h-1.4zM439.68 155.24h1.4v1.4h-1.4zM432.80 156.76h1.4v1.4h-1.4zM434.52 156.76h1.4v1.4h-1.4zM436.24 156.76h1.4v1.4h-1.4zM437.96 156.76h1.4v1.4h-1.4zM439.68 156.76h1.4v1.4h-1.4zM432.80 158.28h1.4v1.4h-1.4zM434.52 158.28h1.4v1.4h-1.4zM436.24 158.28h1.4v1.4h-1.4zM437.96 158.28h1.4v1.4h-1.4zM439.68 158.28h1.4v1.4h-1.4zM432.80 159.80h1.4v1.4h-1.4zM434.52 159.80h1.4v1.4h-1.4zM436.24 159.80h1.4v1.4h-1.4zM437.96 159.80h1.4v1.4h-1.4zM439.68 159.80h1.4v1.4h-1.4zM432.80 161.32h1.4v1.4h-1.4zM434.52 161.32h1.4v1.4h-1.4zM436.24 161.32h1.4v1.4h-1.4zM437.96 161.32h1.4v1.4h-1.4zM439.68 161.32h1.4v1.4h-1.4zM432.80 162.84h1.4v1.4h-1.4zM434.52 162.84h1.4v1.4h-1.4zM436.24 162.84h1.4v1.4h-1.4zM437.96 162.84h1.4v1.4h-1.4zM439.68 162.84h1.4v1.4h-1.4zM432.80 164.36h1.4v1.4h-1.4zM434.52 164.36h1.4v1.4h-1.4zM436.24 164.36h1.4v1.4h-1.4zM437.96 164.36h1.4v1.4h-1.4zM439.68 164.36h1.4v1.4h-1.4zM442.00 155.24h1.4v1.4h-1.4zM448.88 155.24h1.4v1.4h-1.4zM443.72 156.76h1.4v1.4h-1.4zM445.44 156.76h1.4v1.4h-1.4zM447.16 156.76h1.4v1.4h-1.4zM442.00 158.28h1.4v1.4h-1.4zM443.72 158.28h1.4v1.4h-1.4zM445.44 158.28h1.4v1.4h-1.4zM447.16 158.28h1.4v1.4h-1.4zM442.00 159.80h1.4v1.4h-1.4zM443.72 159.80h1.4v1.4h-1.4zM445.44 159.80h1.4v1.4h-1.4zM448.88 159.80h1.4v1.4h-1.4zM442.00 161.32h1.4v1.4h-1.4zM443.72 161.32h1.4v1.4h-1.4zM447.16 161.32h1.4v1.4h-1.4zM448.88 161.32h1.4v1.4h-1.4zM442.00 162.84h1.4v1.4h-1.4zM445.44 162.84h1.4v1.4h-1.4zM447.16 162.84h1.4v1.4h-1.4zM448.88 162.84h1.4v1.4h-1.4zM451.20 155.24h1.4v1.4h-1.4zM452.92 155.24h1.4v1.4h-1.4zM458.08 155.24h1.4v1.4h-1.4zM451.20 156.76h1.4v1.4h-1.4zM454.64 156.76h1.4v1.4h-1.4zM456.36 156.76h1.4v1.4h-1.4zM458.08 156.76h1.4v1.4h-1.4zM452.92 158.28h1.4v1.4h-1.4zM454.64 158.28h1.4v1.4h-1.4zM456.36 158.28h1.4v1.4h-1.4zM458.08 158.28h1.4v1.4h-1.4zM458.08 159.80h1.4v1.4h-1.4zM452.92 161.32h1.4v1.4h-1.4zM454.64 161.32h1.4v1.4h-1.4zM456.36 161.32h1.4v1.4h-1.4zM452.92 162.84h1.4v1.4h-1.4zM454.64 162.84h1.4v1.4h-1.4zM456.36 162.84h1.4v1.4h-1.4zM451.20 164.36h1.4v1.4h-1.4zM458.08 164.36h1.4v1.4h-1.4z" fill="#26260f"/>
<path d="M443.72 155.24h1.4v1.4h-1.4zM445.44 155.24h1.4v1.4h-1.4zM447.16 155.24h1.4v1.4h-1.4zM442.00 156.76h1.4v1.4h-1.4zM448.88 156.76h1.4v1.4h-1.4zM448.88 158.28h1.4v1.4h-1.4zM447.16 159.80h1.4v1.4h-1.4zM445.44 161.32h1.4v1.4h-1.4zM443.72 162.84h1.4v1.4h-1.4zM442.00 164.36h1.4v1.4h-1.4zM443.72 164.36h1.4v1.4h-1.4zM445.44 164.36h1.4v1.4h-1.4zM447.16 164.36h1.4v1.4h-1.4zM448.88 164.36h1.4v1.4h-1.4zM454.64 155.24h1.4v1.4h-1.4zM456.36 155.24h1.4v1.4h-1.4zM452.92 156.76h1.4v1.4h-1.4zM451.20 158.28h1.4v1.4h-1.4zM451.20 159.80h1.4v1.4h-1.4zM452.92 159.80h1.4v1.4h-1.4zM454.64 159.80h1.4v1.4h-1.4zM456.36 159.80h1.4v1.4h-1.4zM451.20 161.32h1.4v1.4h-1.4zM458.08 161.32h1.4v1.4h-1.4zM451.20 162.84h1.4v1.4h-1.4zM458.08 162.84h1.4v1.4h-1.4zM452.92 164.36h1.4v1.4h-1.4zM454.64 164.36h1.4v1.4h-1.4zM456.36 164.36h1.4v1.4h-1.4z" fill="#c8c464"/>
<text x="412" y="178.08" font-family='"Liberation Sans", sans-serif' font-size="6.1" fill="#111" class="t">Peak Fo</text>
<rect x="412.3" y="180.78" width="49.2" height="13.5" fill="#000"/>
<rect x="413.3" y="181.78" width="47.2" height="11.5" fill="#0b0b05"/>
<path d="M414.40 182.31h1.4v1.4h-1.4zM416.12 182.31h1.4v1.4h-1.4zM417.84 182.31h1.4v1.4h-1.4zM419.56 182.31h1.4v1.4h-1.4zM421.28 182.31h1.4v1.4h-1.4zM414.40 183.83h1.4v1.4h-1.4zM416.12 183.83h1.4v1.4h-1.4zM417.84 183.83h1.4v1.4h-1.4zM419.56 183.83h1.4v1.4h-1.4zM421.28 183.83h1.4v1.4h-1.4zM414.40 185.35h1.4v1.4h-1.4zM416.12 185.35h1.4v1.4h-1.4zM417.84 185.35h1.4v1.4h-1.4zM419.56 185.35h1.4v1.4h-1.4zM421.28 185.35h1.4v1.4h-1.4zM414.40 186.87h1.4v1.4h-1.4zM416.12 186.87h1.4v1.4h-1.4zM417.84 186.87h1.4v1.4h-1.4zM419.56 186.87h1.4v1.4h-1.4zM421.28 186.87h1.4v1.4h-1.4zM414.40 188.39h1.4v1.4h-1.4zM416.12 188.39h1.4v1.4h-1.4zM417.84 188.39h1.4v1.4h-1.4zM419.56 188.39h1.4v1.4h-1.4zM421.28 188.39h1.4v1.4h-1.4zM414.40 189.91h1.4v1.4h-1.4zM416.12 189.91h1.4v1.4h-1.4zM417.84 189.91h1.4v1.4h-1.4zM419.56 189.91h1.4v1.4h-1.4zM421.28 189.91h1.4v1.4h-1.4zM414.40 191.43h1.4v1.4h-1.4zM416.12 191.43h1.4v1.4h-1.4zM417.84 191.43h1.4v1.4h-1.4zM419.56 191.43h1.4v1.4h-1.4zM421.28 191.43h1.4v1.4h-1.4zM423.60 182.31h1.4v1.4h-1.4zM425.32 182.31h1.4v1.4h-1.4zM427.04 182.31h1.4v1.4h-1.4zM428.76 182.31h1.4v1.4h-1.4zM430.48 182.31h1.4v1.4h-1.4zM423.60 183.83h1.4v1.4h-1.4zM425.32 183.83h1.4v1.4h-1.4zM427.04 183.83h1.4v1.4h-1.4zM428.76 183.83h1.4v1.4h-1.4zM430.48 183.83h1.4v1.4h-1.4zM423.60 185.35h1.4v1.4h-1.4zM425.32 185.35h1.4v1.4h-1.4zM427.04 185.35h1.4v1.4h-1.4zM428.76 185.35h1.4v1.4h-1.4zM430.48 185.35h1.4v1.4h-1.4zM423.60 186.87h1.4v1.4h-1.4zM425.32 186.87h1.4v1.4h-1.4zM427.04 186.87h1.4v1.4h-1.4zM428.76 186.87h1.4v1.4h-1.4zM430.48 186.87h1.4v1.4h-1.4zM423.60 188.39h1.4v1.4h-1.4zM425.32 188.39h1.4v1.4h-1.4zM427.04 188.39h1.4v1.4h-1.4zM428.76 188.39h1.4v1.4h-1.4zM430.48 188.39h1.4v1.4h-1.4zM423.60 189.91h1.4v1.4h-1.4zM425.32 189.91h1.4v1.4h-1.4zM427.04 189.91h1.4v1.4h-1.4zM428.76 189.91h1.4v1.4h-1.4zM430.48 189.91h1.4v1.4h-1.4zM423.60 191.43h1.4v1.4h-1.4zM425.32 191.43h1.4v1.4h-1.4zM427.04 191.43h1.4v1.4h-1.4zM428.76 191.43h1.4v1.4h-1.4zM430.48 191.43h1.4v1.4h-1.4zM432.80 182.31h1.4v1.4h-1.4zM434.52 182.31h1.4v1.4h-1.4zM436.24 182.31h1.4v1.4h-1.4zM437.96 182.31h1.4v1.4h-1.4zM439.68 182.31h1.4v1.4h-1.4zM432.80 183.83h1.4v1.4h-1.4zM434.52 183.83h1.4v1.4h-1.4zM436.24 183.83h1.4v1.4h-1.4zM437.96 183.83h1.4v1.4h-1.4zM439.68 183.83h1.4v1.4h-1.4zM432.80 185.35h1.4v1.4h-1.4zM434.52 185.35h1.4v1.4h-1.4zM436.24 185.35h1.4v1.4h-1.4zM437.96 185.35h1.4v1.4h-1.4zM439.68 185.35h1.4v1.4h-1.4zM432.80 186.87h1.4v1.4h-1.4zM434.52 186.87h1.4v1.4h-1.4zM436.24 186.87h1.4v1.4h-1.4zM437.96 186.87h1.4v1.4h-1.4zM439.68 186.87h1.4v1.4h-1.4zM432.80 188.39h1.4v1.4h-1.4zM434.52 188.39h1.4v1.4h-1.4zM436.24 188.39h1.4v1.4h-1.4zM437.96 188.39h1.4v1.4h-1.4zM439.68 188.39h1.4v1.4h-1.4zM432.80 189.91h1.4v1.4h-1.4zM434.52 189.91h1.4v1.4h-1.4zM436.24 189.91h1.4v1.4h-1.4zM437.96 189.91h1.4v1.4h-1.4zM439.68 189.91h1.4v1.4h-1.4zM432.80 191.43h1.4v1.4h-1.4zM434.52 191.43h1.4v1.4h-1.4zM436.24 191.43h1.4v1.4h-1.4zM437.96 191.43h1.4v1.4h-1.4zM439.68 191.43h1.4v1.4h-1.4zM442.00 183.83h1.4v1.4h-1.4zM443.72 183.83h1.4v1.4h-1.4zM445.44 183.83h1.4v1.4h-1.4zM448.88 183.83h1.4v1.4h-1.4zM442.00 185.35h1.4v1.4h-1.4zM443.72 185.35h1.4v1.4h-1.4zM447.16 185.35h1.4v1.4h-1.4zM448.88 185.35h1.4v1.4h-1.4zM442.00 186.87h1.4v1.4h-1.4zM443.72 186.87h1.4v1.4h-1.4zM445.44 186.87h1.4v1.4h-1.4zM448.88 186.87h1.4v1.4h-1.4zM442.00 188.39h1.4v1.4h-1.4zM443.72 188.39h1.4v1.4h-1.4zM445.44 188.39h1.4v1.4h-1.4zM447.16 188.39h1.4v1.4h-1.4zM443.72 189.91h1.4v1.4h-1.4zM445.44 189.91h1.4v1.4h-1.4zM447.16 189.91h1.4v1.4h-1.4zM442.00 191.43h1.4v1.4h-1.4zM448.88 191.43h1.4v1.4h-1.4zM452.92 183.83h1.4v1.4h-1.4zM454.64 183.83h1.4v1.4h-1.4zM456.36 183.83h1.4v1.4h-1.4zM458.08 183.83h1.4v1.4h-1.4zM458.08 185.35h1.4v1.4h-1.4zM451.20 186.87h1.4v1.4h-1.4zM452.92 186.87h1.4v1.4h-1.4zM454.64 186.87h1.4v1.4h-1.4zM456.36 186.87h1.4v1.4h-1.4zM451.20 188.39h1.4v1.4h-1.4zM452.92 188.39h1.4v1.4h-1.4zM454.64 188.39h1.4v1.4h-1.4zM456.36 188.39h1.4v1.4h-1.4zM452.92 189.91h1.4v1.4h-1.4zM454.64 189.91h1.4v1.4h-1.4zM456.36 189.91h1.4v1.4h-1.4zM451.20 191.43h1.4v1.4h-1.4zM458.08 191.43h1.4v1.4h-1.4z" fill="#26260f"/>
<path d="M442.00 182.31h1.4v1.4h-1.4zM443.72 182.31h1.4v1.4h-1.4zM445.44 182.31h1.4v1.4h-1.4zM447.16 182.31h1.4v1.4h-1.4zM448.88 182.31h1.4v1.4h-1.4zM447.16 183.83h1.4v1.4h-1.4zM445.44 185.35h1.4v1.4h-1.4zM447.16 186.87h1.4v1.4h-1.4zM448.88 188.39h1.4v1.4h-1.4zM442.00 189.91h1.4v1.4h-1.4zM448.88 189.91h1.4v1.4h-1.4zM443.72 191.43h1.4v1.4h-1.4zM445.44 191.43h1.4v1.4h-1.4zM447.16 191.43h1.4v1.4h-1.4zM451.20 182.31h1.4v1.4h-1.4zM452.92 182.31h1.4v1.4h-1.4zM454.64 182.31h1.4v1.4h-1.4zM456.36 182.31h1.4v1.4h-1.4zM458.08 182.31h1.4v1.4h-1.4zM451.20 183.83h1.4v1.4h-1.4zM451.20 185.35h1.4v1.4h-1.4zM452.92 185.35h1.4v1.4h-1.4zM454.64 185.35h1.4v1.4h-1.4zM456.36 185.35h1.4v1.4h-1.4zM458.08 186.87h1.4v1.4h-1.4zM458.08 188.39h1.4v1.4h-1.4zM451.20 189.91h1.4v1.4h-1.4zM458.08 189.91h1.4v1.4h-1.4zM452.92 191.43h1.4v1.4h-1.4zM454.64 191.43h1.4v1.4h-1.4zM456.36 191.43h1.4v1.4h-1.4z" fill="#c8c464"/>
<text x="242.5" y="215.2" text-anchor="middle" font-family='"Liberation Sans", sans-serif' font-weight="bold" font-size="7.6" fill="#111" class="t">Oscilloscope</text>
<rect x="39.7" y="223.3" width="427.0" height="56.30000000000001" fill="#0b3d0b"/>
<rect x="93.35" y="223.3" width="1" height="56.30000000000001" fill="#7c8874"/>
<rect x="146.70" y="223.3" width="1" height="56.30000000000001" fill="#7c8874"/>
<rect x="200.05" y="223.3" width="1" height="56.30000000000001" fill="#7c8874"/>
<rect x="253.40" y="223.3" width="1" height="56.30000000000001" fill="#7c8874"/>
<rect x="306.75" y="223.3" width="1" height="56.30000000000001" fill="#7c8874"/>
<rect x="360.10" y="223.3" width="1" height="56.30000000000001" fill="#7c8874"/>
<rect x="413.45" y="223.3" width="1" height="56.30000000000001" fill="#7c8874"/>
<rect x="39.7" y="251.4" width="427.0" height="1" fill="#7c8874"/>
<polyline points="39.70,268.84 40.20,271.65 40.70,273.16 41.20,273.27 41.70,271.98 42.20,269.37 42.70,265.61 43.20,260.95 43.70,255.69 44.20,250.19 44.70,244.80 45.20,239.87 45.70,235.73 46.20,232.66 46.70,230.85 47.20,230.43 47.70,231.42 48.20,233.75 48.70,237.27 49.20,241.76 49.70,246.92 50.20,252.40 50.70,257.85 51.20,262.90 51.70,267.24 52.20,270.57 52.70,272.67 53.20,273.40 53.70,272.72 54.20,270.67 54.70,267.39 55.20,263.09 55.70,258.06 56.20,252.62 56.70,247.13 57.20,241.96 57.70,237.44 58.20,233.87 58.70,231.48 59.20,230.44 59.70,230.81 60.20,232.56 60.70,235.59 61.20,239.69 61.70,244.59 62.20,249.97 62.70,255.48 63.20,260.75 63.70,265.44 64.20,269.24 64.70,271.90 65.20,273.25 65.70,273.19 66.20,271.74 66.70,268.98 67.20,265.09 67.70,260.34 68.20,255.04 68.70,249.53 69.20,244.17 69.70,239.33 70.20,235.30 70.70,232.37 71.20,230.73 71.70,230.47 72.20,231.63 72.70,234.11 73.20,237.77 73.70,242.35 74.20,247.56 74.70,253.06 75.20,258.48 75.70,263.47 76.20,267.70 76.70,270.89 77.20,272.83 77.70,273.39 78.20,272.55 78.70,270.34 79.20,266.93 79.70,262.52 80.20,257.42 80.70,251.96 81.20,246.49 81.70,241.37 82.20,236.95 82.70,233.52 83.20,231.29 83.70,230.41 84.20,230.95 84.70,232.86 85.20,236.03 85.70,240.24 86.20,245.21 86.70,250.63 87.20,256.13 87.70,261.35 88.20,265.95 88.70,269.63 89.20,272.14 89.70,273.32 90.20,273.09 90.70,271.47 91.20,268.57 91.70,264.56 92.20,259.73 92.70,254.38 93.20,248.87 93.70,243.56 94.20,238.79 94.70,234.89 95.20,232.11 95.70,230.62 96.20,230.54 96.70,231.86 97.20,234.49 97.70,238.27 98.20,242.95 98.70,248.21 99.20,253.72 99.70,259.11 100.20,264.02 100.70,268.14 101.20,271.19 101.70,272.97 102.20,273.37 102.70,272.35 103.20,269.99 103.70,266.44 104.20,261.94 104.70,256.78 105.20,251.29 105.70,245.85 106.20,240.80 106.70,236.48 107.20,233.18 107.70,231.11 108.20,230.40 108.70,231.11 109.20,233.18 109.70,236.48 110.20,240.80 110.70,245.85 111.20,251.29 111.70,256.78 112.20,261.94 112.70,266.44 113.20,269.99 113.70,272.35 114.20,273.37 114.70,272.97 115.20,271.19 115.70,268.14 116.20,264.02 116.70,259.11 117.20,253.72 117.70,248.21 118.20,242.95 118.70,238.27 119.20,234.49 119.70,231.86 120.20,230.54 120.70,230.62 121.20,232.11 121.70,234.89 122.20,238.79 122.70,243.56 123.20,248.87 123.70,254.38 124.20,259.73 124.70,264.56 125.20,268.57 125.70,271.47 126.20,273.09 126.70,273.32 127.20,272.14 127.70,269.63 128.20,265.95 128.70,261.35 129.20,256.13 129.70,250.63 130.20,245.21 130.70,240.24 131.20,236.03 131.70,232.86 132.20,230.95 132.70,230.41 133.20,231.29 133.70,233.52 134.20,236.95 134.70,241.37 135.20,246.49 135.70,251.96 136.20,257.42 136.70,262.52 137.20,266.93 137.70,270.34 138.20,272.55 138.70,273.39 139.20,272.83 139.70,270.89 140.20,267.70 140.70,263.47 141.20,258.48 141.70,253.06 142.20,247.56 142.70,242.35 143.20,237.77 143.70,234.11 144.20,231.63 144.70,230.47 145.20,230.73 145.70,232.37 146.20,235.30 146.70,239.33 147.20,244.17 147.70,249.53 148.20,255.04 148.70,260.34 149.20,265.09 149.70,268.98 150.20,271.74 150.70,273.19 151.20,273.25 151.70,271.90 152.20,269.24 152.70,265.44 153.20,260.75 153.70,255.48 154.20,249.97 154.70,244.59 155.20,239.69 155.70,235.59 156.20,232.56 156.70,230.81 157.20,230.44 157.70,231.48 158.20,233.87 158.70,237.44 159.20,241.96 159.70,247.13 160.20,252.62 160.70,258.06 161.20,263.09 161.70,267.39 162.20,270.67 162.70,272.72 163.20,273.40 163.70,272.67 164.20,270.57 164.70,267.24 165.20,262.90 165.70,257.85 166.20,252.40 166.70,246.92 167.20,241.76 167.70,237.27 168.20,233.75 168.70,231.42 169.20,230.43 169.70,230.85 170.20,232.66 170.70,235.73 171.20,239.87 171.70,244.80 172.20,250.19 172.70,255.69 173.20,260.95 173.70,265.61 174.20,269.37 174.70,271.98 175.20,273.27 175.70,273.16 176.20,271.65 176.70,268.84 177.20,264.92 177.70,260.14 178.20,254.82 178.70,249.31 179.20,243.97 179.70,239.15 180.20,235.16 180.70,232.28 181.20,230.69 181.70,230.49 182.20,231.70 182.70,234.24 183.20,237.93 183.70,242.55 184.20,247.78 184.70,253.28 185.20,258.69 185.70,263.65 186.20,267.85 186.70,270.99 187.20,272.88 187.70,273.39 188.20,272.48 188.70,270.23 189.20,266.77 189.70,262.33 190.20,257.21 190.70,251.73 191.20,246.27 191.70,241.18 192.20,236.80 192.70,233.40 193.20,231.22 193.70,230.40 194.20,231.00 194.70,232.97 195.20,236.18 195.70,240.42 196.20,245.42 196.70,250.85 197.20,256.34 197.70,261.55 198.20,266.12 198.70,269.75 199.20,272.21 199.70,273.34 200.20,273.05 200.70,271.38 201.20,268.43 201.70,264.38 202.20,259.52 202.70,254.16 203.20,248.65 203.70,243.35 204.20,238.62 204.70,234.76 205.20,232.02 205.70,230.59 206.20,230.56 206.70,231.94 207.20,234.62 207.70,238.45 208.20,243.15 208.70,248.43 209.20,253.94 209.70,259.32 210.20,264.20 210.70,268.28 211.20,271.28 211.70,273.01 212.20,273.35 212.70,272.28 213.20,269.87 213.70,266.28 214.20,261.74 214.70,256.56 215.20,251.07 215.70,245.64 216.20,240.61 216.70,236.33 217.20,233.07 217.70,231.05 218.20,230.40 218.70,231.16 219.20,233.29 219.70,236.64 220.20,240.99 220.70,246.06 221.20,251.51 221.70,256.99 222.20,262.14 222.70,266.61 223.20,270.11 223.70,272.42 224.20,273.38 224.70,272.92 225.20,271.09 225.70,267.99 226.20,263.84 226.70,258.90 227.20,253.50 227.70,248.00 228.20,242.75 228.70,238.10 229.20,234.36 229.70,231.78 230.20,230.51 230.70,230.66 231.20,232.19 231.70,235.03 232.20,238.97 232.70,243.76 233.20,249.09 233.70,254.60 234.20,259.94 234.70,264.74 235.20,268.70 235.70,271.56 236.20,273.13 236.70,273.30 237.20,272.06 237.70,269.50 238.20,265.78 238.70,261.15 239.20,255.91 239.70,250.41 240.20,245.00 240.70,240.05 241.20,235.88 241.70,232.76 242.20,230.90 242.70,230.42 243.20,231.35 243.70,233.63 244.20,237.11 244.70,241.57 245.20,246.70 245.70,252.18 246.20,257.63 246.70,262.71 247.20,267.08 247.70,270.45 248.20,272.61 248.70,273.40 249.20,272.78 249.70,270.78 250.20,267.55 250.70,263.28 251.20,258.27 251.70,252.84 252.20,247.35 252.70,242.15 253.20,237.60 253.70,233.99 254.20,231.55 254.70,230.46 255.20,230.77 255.70,232.47 256.20,235.45 256.70,239.51 257.20,244.38 257.70,249.75 258.20,255.26 258.70,260.55 259.20,265.27 259.70,269.11 260.20,271.82 260.70,273.22 261.20,273.22 261.70,271.82 262.20,269.11 262.70,265.27 263.20,260.55 263.70,255.26 264.20,249.75 264.70,244.38 265.20,239.51 265.70,235.45 266.20,232.47 266.70,230.77 267.20,230.46 267.70,231.55 268.20,233.99 268.70,237.60 269.20,242.15 269.70,247.35 270.20,252.84 270.70,258.27 271.20,263.28 271.70,267.55 272.20,270.78 272.70,272.78 273.20,273.40 273.70,272.61 274.20,270.45 274.70,267.08 275.20,262.71 275.70,257.63 276.20,252.18 276.70,246.70 277.20,241.57 277.70,237.11 278.20,233.63 278.70,231.35 279.20,230.42 279.70,230.90 280.20,232.76 280.70,235.88 281.20,240.05 281.70,245.00 282.20,250.41 282.70,255.91 283.20,261.15 283.70,265.78 284.20,269.50 284.70,272.06 285.20,273.30 285.70,273.13 286.20,271.56 286.70,268.70 287.20,264.74 287.70,259.94 288.20,254.60 288.70,249.09 289.20,243.76 289.70,238.97 290.20,235.03 290.70,232.19 291.20,230.66 291.70,230.51 292.20,231.78 292.70,234.36 293.20,238.10 293.70,242.75 294.20,248.00 294.70,253.50 295.20,258.90 295.70,263.84 296.20,267.99 296.70,271.09 297.20,272.92 297.70,273.38 298.20,272.42 298.70,270.11 299.20,266.61 299.70,262.14 300.20,256.99 300.70,251.51 301.20,246.06 301.70,240.99 302.20,236.64 302.70,233.29 303.20,231.16 303.70,230.40 304.20,231.05 304.70,233.07 305.20,236.33 305.70,240.61 306.20,245.64 306.70,251.07 307.20,256.56 307.70,261.74 308.20,266.28 308.70,269.87 309.20,272.28 309.70,273.35 310.20,273.01 310.70,271.28 311.20,268.28 311.70,264.20 312.20,259.32 312.70,253.94 313.20,248.43 313.70,243.15 314.20,238.45 314.70,234.62 315.20,231.94 315.70,230.56 316.20,230.59 316.70,232.02 317.20,234.76 317.70,238.62 318.20,243.35 318.70,248.65 319.20,254.16 319.70,259.52 320.20,264.38 320.70,268.43 321.20,271.38 321.70,273.05 322.20,273.34 322.70,272.21 323.20,269.75 323.70,266.12 324.20,261.55 324.70,256.34 325.20,250.85 325.70,245.42 326.20,240.42 326.70,236.18 327.20,232.97 327.70,231.00 328.20,230.40 328.70,231.22 329.20,233.40 329.70,236.80 330.20,241.18 330.70,246.27 331.20,251.73 331.70,257.21 332.20,262.33 332.70,266.77 333.20,270.23 333.70,272.48 334.20,273.39 334.70,272.88 335.20,270.99 335.70,267.85 336.20,263.65 336.70,258.69 337.20,253.28 337.70,247.78 338.20,242.55 338.70,237.93 339.20,234.24 339.70,231.70 340.20,230.49 340.70,230.69 341.20,232.28 341.70,235.16 342.20,239.15 342.70,243.97 343.20,249.31 343.70,254.82 344.20,260.14 344.70,264.92 345.20,268.84 345.70,271.65 346.20,273.16 346.70,273.27 347.20,271.98 347.70,269.37 348.20,265.61 348.70,260.95 349.20,255.69 349.70,250.19 350.20,244.80 350.70,239.87 351.20,235.73 351.70,232.66 352.20,230.85 352.70,230.43 353.20,231.42 353.70,233.75 354.20,237.27 354.70,241.76 355.20,246.92 355.70,252.40 356.20,257.85 356.70,262.90 357.20,267.24 357.70,270.57 358.20,272.67 358.70,273.40 359.20,272.72 359.70,270.67 360.20,267.39 360.70,263.09 361.20,258.06 361.70,252.62 362.20,247.13 362.70,241.96 363.20,237.44 363.70,233.87 364.20,231.48 364.70,230.44 365.20,230.81 365.70,232.56 366.20,235.59 366.70,239.69 367.20,244.59 367.70,249.97 368.20,255.48 368.70,260.75 369.20,265.44 369.70,269.24 370.20,271.90 370.70,273.25 371.20,273.19 371.70,271.74 372.20,268.98 372.70,265.09 373.20,260.34 373.70,255.04 374.20,249.53 374.70,244.17 375.20,239.33 375.70,235.30 376.20,232.37 376.70,230.73 377.20,230.47 377.70,231.63 378.20,234.11 378.70,237.77 379.20,242.35 379.70,247.56 380.20,253.06 380.70,258.48 381.20,263.47 381.70,267.70 382.20,270.89 382.70,272.83 383.20,273.39 383.70,272.55 384.20,270.34 384.70,266.93 385.20,262.52 385.70,257.42 386.20,251.96 386.70,246.49 387.20,241.37 387.70,236.95 388.20,233.52 388.70,231.29 389.20,230.41 389.70,230.95 390.20,232.86 390.70,236.03 391.20,240.24 391.70,245.21 392.20,250.63 392.70,256.13 393.20,261.35 393.70,265.95 394.20,269.63 394.70,272.14 395.20,273.32 395.70,273.09 396.20,271.47 396.70,268.57 397.20,264.56 397.70,259.73 398.20,254.38 398.70,248.87 399.20,243.56 399.70,238.79 400.20,234.89 400.70,232.11 401.20,230.62 401.70,230.54 402.20,231.86 402.70,234.49 403.20,238.27 403.70,242.95 404.20,248.21 404.70,253.72 405.20,259.11 405.70,264.02 406.20,268.14 406.70,271.19 407.20,272.97 407.70,273.37 408.20,272.35 408.70,269.99 409.20,266.44 409.70,261.94 410.20,256.78 410.70,251.29 411.20,245.85 411.70,240.80 412.20,236.48 412.70,233.18 413.20,231.11 413.70,230.40 414.20,231.11 414.70,233.18 415.20,236.48 415.70,240.80 416.20,245.85 416.70,251.29 417.20,256.78 417.70,261.94 418.20,266.44 418.70,269.99 419.20,272.35 419.70,273.37 420.20,272.97 420.70,271.19 421.20,268.14 421.70,264.02 422.20,259.11 422.70,253.72 423.20,248.21 423.70,242.95 424.20,238.27 424.70,234.49 425.20,231.86 425.70,230.54 426.20,230.62 426.70,232.11 427.20,234.89 427.70,238.79 428.20,243.56 428.70,248.87 429.20,254.38 429.70,259.73 430.20,264.56 430.70,268.57 431.20,271.47 431.70,273.09 432.20,273.32 432.70,272.14 433.20,269.63 433.70,265.95 434.20,261.35 434.70,256.13 435.20,250.63 435.70,245.21 436.20,240.24 436.70,236.03 437.20,232.86 437.70,230.95 438.20,230.41 438.70,231.29 439.20,233.52 439.70,236.95 440.20,241.37 440.70,246.49 441.20,251.96 441.70,257.42 442.20,262.52 442.70,266.93 443.20,270.34 443.70,272.55 444.20,273.39 444.70,272.83 445.20,270.89 445.70,267.70 446.20,263.47 446.70,258.48 447.20,253.06 447.70,247.56 448.20,242.35 448.70,237.77 449.20,234.11 449.70,231.63 450.20,230.47 450.70,230.73 451.20,232.37 451.70,235.30 452.20,239.33 452.70,244.17 453.20,249.53 453.70,255.04 454.20,260.34 454.70,265.09 455.20,268.98 455.70,271.74 456.20,273.19 456.70,273.25 457.20,271.90 457.70,269.24 458.20,265.44 458.70,260.75 459.20,255.48 459.70,249.97 460.20,244.59 460.70,239.69 461.20,235.59 461.70,232.56 462.20,230.81 462.70,230.44 463.20,231.48 463.70,233.87 464.20,237.44 464.70,241.96 465.20,247.13 465.70,252.62 466.20,258.06 466.70,263.09" fill="none" stroke="#3cff3c" stroke-width="1.8"/>
<rect x="30" y="223.3" width="1" height="57.5" fill="#333"/>
<rect x="30" y="222.70" width="8.5" height="1.2" fill="#d89080"/>
<rect x="30" y="228.49" width="4.2" height="1.1" fill="#222"/>
<rect x="30" y="234.18" width="4.2" height="1.1" fill="#222"/>
<rect x="30" y="239.87" width="4.2" height="1.1" fill="#222"/>
<rect x="30" y="245.56" width="4.2" height="1.1" fill="#222"/>
<rect x="30" y="251.15" width="8.5" height="1.2" fill="#d89080"/>
<rect x="30" y="256.94" width="4.2" height="1.1" fill="#222"/>
<rect x="30" y="262.63" width="4.2" height="1.1" fill="#222"/>
<rect x="30" y="268.32" width="4.2" height="1.1" fill="#222"/>
<rect x="30" y="274.01" width="4.2" height="1.1" fill="#222"/>
<rect x="30" y="279.60" width="8.5" height="1.2" fill="#d89080"/>
<text x="27.6" y="226" text-anchor="end" font-family='"Liberation Sans", sans-serif' font-size="6.8" fill="#222" class="t">0.1</text>
<text x="27.6" y="254.3" text-anchor="end" font-family='"Liberation Sans", sans-serif' font-size="6.8" fill="#222" class="t">0.0</text>
<text x="27.6" y="282.8" text-anchor="end" font-family='"Liberation Sans", sans-serif' font-size="6.8" fill="#222" class="t">-0.1</text>
<rect x="39.7" y="289.6" width="428.1" height="1" fill="#333"/>
<rect x="39.95" y="282.2" width="1.1" height="8" fill="#d89080"/>
<text x="40.50" y="297.3" text-anchor="middle" font-family='"Liberation Sans", sans-serif' font-size="6.6" fill="#222" class="t">0</text>
<rect x="53.34" y="286.3" width="1" height="3.8" fill="#222"/>
<rect x="66.67" y="286.3" width="1" height="3.8" fill="#222"/>
<rect x="80.01" y="286.3" width="1" height="3.8" fill="#222"/>
<rect x="93.30" y="282.2" width="1.1" height="8" fill="#d89080"/>
<text x="93.85" y="297.3" text-anchor="middle" font-family='"Liberation Sans", sans-serif' font-size="6.6" fill="#222" class="t">64</text>
<rect x="106.69" y="286.3" width="1" height="3.8" fill="#222"/>
<rect x="120.03" y="286.3" width="1" height="3.8" fill="#222"/>
<rect x="133.36" y="286.3" width="1" height="3.8" fill="#222"/>
<rect x="146.65" y="282.2" width="1.1" height="8" fill="#d89080"/>
<text x="147.20" y="297.3" text-anchor="middle" font-family='"Liberation Sans", sans-serif' font-size="6.6" fill="#222" class="t">128</text>
<rect x="160.04" y="286.3" width="1" height="3.8" fill="#222"/>
<rect x="173.38" y="286.3" width="1" height="3.8" fill="#222"/>
<rect x="186.71" y="286.3" width="1" height="3.8" fill="#222"/>
<rect x="200.00" y="282.2" width="1.1" height="8" fill="#d89080"/>
<text x="200.55" y="297.3" text-anchor="middle" font-family='"Liberation Sans", sans-serif' font-size="6.6" fill="#222" class="t">192</text>
<rect x="213.39" y="286.3" width="1" height="3.8" fill="#222"/>
<rect x="226.72" y="286.3" width="1" height="3.8" fill="#222"/>
<rect x="240.06" y="286.3" width="1" height="3.8" fill="#222"/>
<rect x="253.35" y="282.2" width="1.1" height="8" fill="#d89080"/>
<text x="253.90" y="297.3" text-anchor="middle" font-family='"Liberation Sans", sans-serif' font-size="6.6" fill="#222" class="t">256</text>
<rect x="266.74" y="286.3" width="1" height="3.8" fill="#222"/>
<rect x="280.08" y="286.3" width="1" height="3.8" fill="#222"/>
<rect x="293.41" y="286.3" width="1" height="3.8" fill="#222"/>
<rect x="306.70" y="282.2" width="1.1" height="8" fill="#d89080"/>
<text x="307.25" y="297.3" text-anchor="middle" font-family='"Liberation Sans", sans-serif' font-size="6.6" fill="#222" class="t">320</text>
<rect x="320.09" y="286.3" width="1" height="3.8" fill="#222"/>
<rect x="333.43" y="286.3" width="1" height="3.8" fill="#222"/>
<rect x="346.76" y="286.3" width="1" height="3.8" fill="#222"/>
<rect x="360.05" y="282.2" width="1.1" height="8" fill="#d89080"/>
<text x="360.60" y="297.3" text-anchor="middle" font-family='"Liberation Sans", sans-serif' font-size="6.6" fill="#222" class="t">384</text>
<rect x="373.44" y="286.3" width="1" height="3.8" fill="#222"/>
<rect x="386.78" y="286.3" width="1" height="3.8" fill="#222"/>
<rect x="400.11" y="286.3" width="1" height="3.8" fill="#222"/>
<rect x="413.40" y="282.2" width="1.1" height="8" fill="#d89080"/>
<text x="413.95" y="297.3" text-anchor="middle" font-family='"Liberation Sans", sans-serif' font-size="6.6" fill="#222" class="t">448</text>
<rect x="426.79" y="286.3" width="1" height="3.8" fill="#222"/>
<rect x="440.12" y="286.3" width="1" height="3.8" fill="#222"/>
<rect x="453.46" y="286.3" width="1" height="3.8" fill="#222"/>
<rect x="466.75" y="282.2" width="1.1" height="8" fill="#d89080"/>
<text x="468.30" y="297.3" text-anchor="end" font-family='"Liberation Sans", sans-serif' font-size="6.6" fill="#222" class="t">512</text>
<rect x="16" y="303.5" width="452.5" height="91.0" fill="#ECE9D8"/>
<path d="M16 394.5 V303.5 H468.5" fill="none" stroke="#fff" stroke-width="1"/>
<path d="M16 394.5 H468.5 V303.5" fill="none" stroke="#5e5c52" stroke-width="1.3"/>
<text x="242.5" y="312.6" text-anchor="middle" font-family='"Liberation Sans", sans-serif' font-weight="bold" font-size="7.6" fill="#111" class="t">Spectrum Analyzer (1 Hz)</text>
<rect x="41.4" y="320.3" width="424.70000000000005" height="53.099999999999966" fill="#03034a"/>
<rect x="41.4" y="330.70" width="424.70000000000005" height="1" fill="#9c9cd0"/>
<rect x="41.4" y="341.40" width="424.70000000000005" height="1" fill="#9c9cd0"/>
<rect x="41.4" y="352.10" width="424.70000000000005" height="1" fill="#9c9cd0"/>
<rect x="41.4" y="362.80" width="424.70000000000005" height="1" fill="#9c9cd0"/>
<rect x="155" y="351.8" width="3.7" height="21.6" fill="#f8f878"/>
<rect x="159.4" y="342.8" width="3.9" height="30.6" fill="#f8f878"/>
<rect x="163.8" y="349.8" width="4.6" height="23.6" fill="#f8f878"/>
<rect x="31.3" y="320.5" width="1" height="53.5" fill="#333"/>
<rect x="31.3" y="319.90" width="8" height="1.2" fill="#d89080"/>
<text x="30" y="322.90" text-anchor="end" font-family='"Liberation Sans", sans-serif' font-size="7" fill="#222" class="t">170</text>
<rect x="31.3" y="321.27" width="3" height="0.6" fill="#a0a098"/>
<rect x="31.3" y="322.19" width="3.8" height="0.9" fill="#303030"/>
<rect x="31.3" y="323.41" width="3" height="0.6" fill="#a0a098"/>
<rect x="31.3" y="324.33" width="3.8" height="0.9" fill="#303030"/>
<rect x="31.3" y="325.55" width="3" height="0.6" fill="#a0a098"/>
<rect x="31.3" y="326.47" width="3.8" height="0.9" fill="#303030"/>
<rect x="31.3" y="327.69" width="3" height="0.6" fill="#a0a098"/>
<rect x="31.3" y="328.61" width="3.8" height="0.9" fill="#303030"/>
<rect x="31.3" y="329.83" width="3" height="0.6" fill="#a0a098"/>
<rect x="31.3" y="330.60" width="8" height="1.2" fill="#d89080"/>
<text x="30" y="333.60" text-anchor="end" font-family='"Liberation Sans", sans-serif' font-size="7" fill="#222" class="t">160</text>
<rect x="31.3" y="331.97" width="3" height="0.6" fill="#a0a098"/>
<rect x="31.3" y="332.89" width="3.8" height="0.9" fill="#303030"/>
<rect x="31.3" y="334.11" width="3" height="0.6" fill="#a0a098"/>
<rect x="31.3" y="335.03" width="3.8" height="0.9" fill="#303030"/>
<rect x="31.3" y="336.25" width="3" height="0.6" fill="#a0a098"/>
<rect x="31.3" y="337.17" width="3.8" height="0.9" fill="#303030"/>
<rect x="31.3" y="338.39" width="3" height="0.6" fill="#a0a098"/>
<rect x="31.3" y="339.31" width="3.8" height="0.9" fill="#303030"/>
<rect x="31.3" y="340.53" width="3" height="0.6" fill="#a0a098"/>
<rect x="31.3" y="341.30" width="8" height="1.2" fill="#d89080"/>
<text x="30" y="344.30" text-anchor="end" font-family='"Liberation Sans", sans-serif' font-size="7" fill="#222" class="t">150</text>
<rect x="31.3" y="342.67" width="3" height="0.6" fill="#a0a098"/>
<rect x="31.3" y="343.59" width="3.8" height="0.9" fill="#303030"/>
<rect x="31.3" y="344.81" width="3" height="0.6" fill="#a0a098"/>
<rect x="31.3" y="345.73" width="3.8" height="0.9" fill="#303030"/>
<rect x="31.3" y="346.95" width="3" height="0.6" fill="#a0a098"/>
<rect x="31.3" y="347.87" width="3.8" height="0.9" fill="#303030"/>
<rect x="31.3" y="349.09" width="3" height="0.6" fill="#a0a098"/>
<rect x="31.3" y="350.01" width="3.8" height="0.9" fill="#303030"/>
<rect x="31.3" y="351.23" width="3" height="0.6" fill="#a0a098"/>
<rect x="31.3" y="352.00" width="8" height="1.2" fill="#d89080"/>
<text x="30" y="355.00" text-anchor="end" font-family='"Liberation Sans", sans-serif' font-size="7" fill="#222" class="t">140</text>
<rect x="31.3" y="353.37" width="3" height="0.6" fill="#a0a098"/>
<rect x="31.3" y="354.29" width="3.8" height="0.9" fill="#303030"/>
<rect x="31.3" y="355.51" width="3" height="0.6" fill="#a0a098"/>
<rect x="31.3" y="356.43" width="3.8" height="0.9" fill="#303030"/>
<rect x="31.3" y="357.65" width="3" height="0.6" fill="#a0a098"/>
<rect x="31.3" y="358.57" width="3.8" height="0.9" fill="#303030"/>
<rect x="31.3" y="359.79" width="3" height="0.6" fill="#a0a098"/>
<rect x="31.3" y="360.71" width="3.8" height="0.9" fill="#303030"/>
<rect x="31.3" y="361.93" width="3" height="0.6" fill="#a0a098"/>
<rect x="31.3" y="362.70" width="8" height="1.2" fill="#d89080"/>
<text x="30" y="365.70" text-anchor="end" font-family='"Liberation Sans", sans-serif' font-size="7" fill="#222" class="t">130</text>
<rect x="31.3" y="364.07" width="3" height="0.6" fill="#a0a098"/>
<rect x="31.3" y="364.99" width="3.8" height="0.9" fill="#303030"/>
<rect x="31.3" y="366.21" width="3" height="0.6" fill="#a0a098"/>
<rect x="31.3" y="367.13" width="3.8" height="0.9" fill="#303030"/>
<rect x="31.3" y="368.35" width="3" height="0.6" fill="#a0a098"/>
<rect x="31.3" y="369.27" width="3.8" height="0.9" fill="#303030"/>
<rect x="31.3" y="370.49" width="3" height="0.6" fill="#a0a098"/>
<rect x="31.3" y="371.41" width="3.8" height="0.9" fill="#303030"/>
<rect x="31.3" y="372.63" width="3" height="0.6" fill="#a0a098"/>
<rect x="31.3" y="373.40" width="8" height="1.2" fill="#d89080"/>
<text x="30" y="376.40" text-anchor="end" font-family='"Liberation Sans", sans-serif' font-size="7" fill="#222" class="t">120</text>
<rect x="41.4" y="383.3" width="424.40000000000003" height="1" fill="#333"/>
<rect x="41.15" y="376.3" width="1.1" height="7.5" fill="#d89080"/>
<text x="40.00" y="390.8" text-anchor="start" font-family='"Liberation Sans", sans-serif' font-size="6.8" fill="#222" class="t">10</text>
<rect x="50.61" y="380" width="1" height="3.8" fill="#222"/>
<rect x="60.03" y="380" width="1" height="3.8" fill="#222"/>
<rect x="69.44" y="380" width="1" height="3.8" fill="#222"/>
<rect x="78.85" y="380" width="1" height="3.8" fill="#222"/>
<rect x="88.22" y="376.3" width="1.1" height="7.5" fill="#d89080"/>
<text x="88.77" y="390.8" text-anchor="middle" font-family='"Liberation Sans", sans-serif' font-size="6.8" fill="#222" class="t">20</text>
<rect x="97.68" y="380" width="1" height="3.8" fill="#222"/>
<rect x="107.09" y="380" width="1" height="3.8" fill="#222"/>
<rect x="116.51" y="380" width="1" height="3.8" fill="#222"/>
<rect x="125.92" y="380" width="1" height="3.8" fill="#222"/>
<rect x="135.28" y="376.3" width="1.1" height="7.5" fill="#d89080"/>
<text x="135.83" y="390.8" text-anchor="middle" font-family='"Liberation Sans", sans-serif' font-size="6.8" fill="#222" class="t">30</text>
<rect x="144.75" y="380" width="1" height="3.8" fill="#222"/>
<rect x="154.16" y="380" width="1" height="3.8" fill="#222"/>
<rect x="163.57" y="380" width="1" height="3.8" fill="#222"/>
<rect x="172.99" y="380" width="1" height="3.8" fill="#222"/>
<rect x="182.35" y="376.3" width="1.1" height="7.5" fill="#d89080"/>
<text x="182.90" y="390.8" text-anchor="middle" font-family='"Liberation Sans", sans-serif' font-size="6.8" fill="#222" class="t">40</text>
<rect x="191.81" y="380" width="1" height="3.8" fill="#222"/>
<rect x="201.23" y="380" width="1" height="3.8" fill="#222"/>
<rect x="210.64" y="380" width="1" height="3.8" fill="#222"/>
<rect x="220.05" y="380" width="1" height="3.8" fill="#222"/>
<rect x="229.42" y="376.3" width="1.1" height="7.5" fill="#d89080"/>
<text x="229.97" y="390.8" text-anchor="middle" font-family='"Liberation Sans", sans-serif' font-size="6.8" fill="#222" class="t">50</text>
<rect x="238.88" y="380" width="1" height="3.8" fill="#222"/>
<rect x="248.29" y="380" width="1" height="3.8" fill="#222"/>
<rect x="257.71" y="380" width="1" height="3.8" fill="#222"/>
<rect x="267.12" y="380" width="1" height="3.8" fill="#222"/>
<rect x="276.48" y="376.3" width="1.1" height="7.5" fill="#d89080"/>
<text x="277.03" y="390.8" text-anchor="middle" font-family='"Liberation Sans", sans-serif' font-size="6.8" fill="#222" class="t">60</text>
<rect x="285.95" y="380" width="1" height="3.8" fill="#222"/>
<rect x="295.36" y="380" width="1" height="3.8" fill="#222"/>
<rect x="304.77" y="380" width="1" height="3.8" fill="#222"/>
<rect x="314.19" y="380" width="1" height="3.8" fill="#222"/>
<rect x="323.55" y="376.3" width="1.1" height="7.5" fill="#d89080"/>
<text x="324.10" y="390.8" text-anchor="middle" font-family='"Liberation Sans", sans-serif' font-size="6.8" fill="#222" class="t">70</text>
<rect x="333.01" y="380" width="1" height="3.8" fill="#222"/>
<rect x="342.43" y="380" width="1" height="3.8" fill="#222"/>
<rect x="351.84" y="380" width="1" height="3.8" fill="#222"/>
<rect x="361.25" y="380" width="1" height="3.8" fill="#222"/>
<rect x="370.62" y="376.3" width="1.1" height="7.5" fill="#d89080"/>
<text x="371.17" y="390.8" text-anchor="middle" font-family='"Liberation Sans", sans-serif' font-size="6.8" fill="#222" class="t">80</text>
<rect x="380.08" y="380" width="1" height="3.8" fill="#222"/>
<rect x="389.49" y="380" width="1" height="3.8" fill="#222"/>
<rect x="398.91" y="380" width="1" height="3.8" fill="#222"/>
<rect x="408.32" y="380" width="1" height="3.8" fill="#222"/>
<rect x="417.68" y="376.3" width="1.1" height="7.5" fill="#d89080"/>
<text x="418.23" y="390.8" text-anchor="middle" font-family='"Liberation Sans", sans-serif' font-size="6.8" fill="#222" class="t">90</text>
<rect x="427.15" y="380" width="1" height="3.8" fill="#222"/>
<rect x="436.56" y="380" width="1" height="3.8" fill="#222"/>
<rect x="445.97" y="380" width="1" height="3.8" fill="#222"/>
<rect x="455.39" y="380" width="1" height="3.8" fill="#222"/>
<rect x="464.75" y="376.3" width="1.1" height="7.5" fill="#d89080"/>
<text x="466.50" y="390.8" text-anchor="end" font-family='"Liberation Sans", sans-serif' font-size="6.8" fill="#222" class="t">100</text>
<rect x="479" y="51.5" width="110.5" height="81.5" rx="2.5" fill="none" stroke="#d6d3c4" stroke-width="0.9"/>
<rect x="481" y="47.5" width="20" height="7" fill="#ECE9D8"/>
<text x="482.4" y="53.4" font-family='"Liberation Sans", sans-serif' font-size="6.2" fill="#2a52be">Timer</text>
<rect x="488" y="61.2" width="90.3" height="43.3" fill="#000"/>
<text x="533" y="96.8" text-anchor="middle" font-family='"Liberation Sans", sans-serif' font-weight="bold" font-size="37.5" fill="#f01818">SPL</text>
<rect x="487.5" y="111.5" width="27.0" height="16.0" rx="2" fill="url(#btn)" stroke="#3c4660" stroke-width="1.1"/>
<rect x="488.6" y="112.6" width="24.8" height="13.8" rx="1.5" fill="none" stroke="#c8d4f0" stroke-width="0.7"/>
<text x="501.0" y="121.8" text-anchor="middle" font-family='"Liberation Sans", sans-serif' font-size="6.6" fill="#000" class="t" style="stroke-width:0.28">Reset</text>
<rect x="520.5" y="111.5" width="26.0" height="16.0" rx="2" fill="#f5f4ea" stroke="#cac8bb" stroke-width="1"/>
<text x="533.5" y="121.8" text-anchor="middle" font-family='"Liberation Sans", sans-serif' font-size="6.6" fill="#aca899" class="">Start</text>
<rect x="553" y="111.5" width="26.5" height="16.0" rx="2" fill="#f5f4ea" stroke="#cac8bb" stroke-width="1"/>
<text x="566.25" y="121.8" text-anchor="middle" font-family='"Liberation Sans", sans-serif' font-size="6.6" fill="#aca899" class="">Stop</text>
<rect x="478.5" y="141" width="111.0" height="36.5" rx="2.5" fill="none" stroke="#d6d3c4" stroke-width="0.9"/>
<rect x="480.5" y="137" width="40" height="7" fill="#ECE9D8"/>
<text x="481.9" y="142.9" font-family='"Liberation Sans", sans-serif' font-size="6.2" fill="#2a52be">Judging Mode</text>
<rect x="487.5" y="151" width="51.0" height="17.5" rx="2" fill="url(#btn)" stroke="#4c5460" stroke-width="1.1"/>
<text x="513.0" y="162.05" text-anchor="middle" font-family='"Liberation Sans", sans-serif' font-size="6.6" fill="#000" class="t">Mode Select</text>
<rect x="548" y="146.5" width="28.5" height="27.5" fill="#fcfcfa"/>
<path d="M548.3 173.8 V146.8 H576.3" fill="none" stroke="#8a887a" stroke-width="0.9"/>
<radialGradient id="lg2" cx="0.5" cy="0.45" r="0.55"><stop offset="0" stop-color="#144a24"/><stop offset="0.75" stop-color="#0a2212"/><stop offset="1" stop-color="#3a4644"/></radialGradient>
<ellipse cx="562.2" cy="160.2" rx="13.5" ry="13" fill="url(#lg2)" stroke="#505a58" stroke-width="0.9"/>
<text x="0" y="0" text-anchor="middle" font-family='"Liberation Sans", sans-serif' font-size="23.5" fill="#c0f2b0" stroke="#c0f2b0" stroke-width="0.35" transform="translate(562.4 168.1) scale(0.43 1)">SPL</text>
<rect x="478.5" y="186.5" width="111.0" height="102.5" rx="2.5" fill="none" stroke="#d6d3c4" stroke-width="0.9"/>
<rect x="480.5" y="182.5" width="38" height="7" fill="#ECE9D8"/>
<text x="481.9" y="188.4" font-family='"Liberation Sans", sans-serif' font-size="6.2" fill="#2a52be">SPL Readout</text>
<circle cx="490.5" cy="200.1" r="3.6" fill="#f4f4f0" stroke="#5a6a80" stroke-width="0.9"/>
<text x="496" y="202.4" font-family='"Liberation Sans", sans-serif' font-size="6.4" fill="#111" class="t">Real Time</text>
<circle cx="490.5" cy="209.1" r="3.6" fill="#f4f4f0" stroke="#5a6a80" stroke-width="0.9"/>
<text x="496" y="211.4" font-family='"Liberation Sans", sans-serif' font-size="6.4" fill="#111" class="t">Rolling Average</text>
<circle cx="490.5" cy="218.1" r="3.6" fill="#f4f4f0" stroke="#5a6a80" stroke-width="0.9"/>
<circle cx="490.5" cy="218.1" r="1.5" fill="#2a8a2a"/>
<text x="496" y="220.4" font-family='"Liberation Sans", sans-serif' font-size="6.4" fill="#111" class="t">Peak Hold</text>
<rect x="497" y="224.3" width="7" height="7" fill="#f8f8f4" stroke="#5a6a80" stroke-width="0.9"/>
<text x="506" y="230.3" font-family='"Liberation Sans", sans-serif' font-size="6.4" fill="#111" class="t">Auto Reset</text>
<text x="556" y="198.2" font-family='"Liberation Sans", sans-serif' font-size="6.4" fill="#111" class="t">Samples</text>
<rect x="557.5" y="200.3" width="22" height="11.5" fill="#fff" stroke="#c4c2b6" stroke-width="0.9"/>
<text x="577.5" y="208.5" text-anchor="end" font-family='"Liberation Sans", sans-serif' font-size="6.4" fill="#a8a698">5,00</text>
<text x="556" y="220.2" font-family='"Liberation Sans", sans-serif' font-size="6.4" fill="#111" class="t">Interval</text>
<rect x="557.5" y="222" width="22" height="10.5" fill="#fff" stroke="#c4c2b6" stroke-width="0.9"/>
<text x="577.5" y="230" text-anchor="end" font-family='"Liberation Sans", sans-serif' font-size="6.4" fill="#a8a698">10</text>
<text x="486.8" y="242.5" font-family='"Liberation Sans", sans-serif' font-size="6.4" fill="#111" class="t">Update Speed</text>
<rect x="487" y="246" width="93.5" height="11" fill="#fff" stroke="#7f9db9" stroke-width="0.9"/>
<rect x="570.5" y="246.8" width="9.3" height="9.4" rx="1" fill="#c2d3fb" stroke="#b0c4f0" stroke-width="0.5"/>
<path d="M573.3 250.3 L575.2 252.3 L577.1 250.3" fill="none" stroke="#4d6185" stroke-width="1.3"/>
<text x="489" y="254" font-family='"Liberation Sans", sans-serif' font-size="6.4" fill="#111" class="t">1X - 256 Hz Max</text>
<rect x="487.5" y="263.7" width="27.0" height="16.600000000000023" rx="2" fill="url(#btn)" stroke="#4c5460" stroke-width="1.1"/>
<text x="501.0" y="274.3" text-anchor="middle" font-family='"Liberation Sans", sans-serif' font-size="6.6" fill="#000" class="t">Reset</text>
<rect x="520" y="263.7" width="27" height="16.600000000000023" rx="2" fill="url(#btn)" stroke="#4c5460" stroke-width="1.1"/>
<text x="533.5" y="274.3" text-anchor="middle" font-family='"Liberation Sans", sans-serif' font-size="6.6" fill="#000" class="t">PVC</text>
<rect x="478.5" y="339" width="110.5" height="35.5" rx="2.5" fill="none" stroke="#d6d3c4" stroke-width="0.9"/>
<rect x="480.5" y="335" width="22" height="7" fill="#ECE9D8"/>
<text x="481.9" y="340.9" font-family='"Liberation Sans", sans-serif' font-size="6.2" fill="#2a52be">Cursor</text>
<text x="486.5" y="349.8" font-family='"Liberation Sans", sans-serif' font-size="6.4" fill="#111" class="t">Freq (Hz)</text>
<text x="528.8" y="349.8" font-family='"Liberation Sans", sans-serif' font-size="6.4" fill="#111" class="t">SPL (dB)</text>
<rect x="487" y="352.6" width="30.6" height="13.7" fill="#000"/>
<rect x="488" y="353.6" width="28.6" height="11.7" fill="#0b0b05"/>
<path d="M489.60 354.23h1.4v1.4h-1.4zM491.32 354.23h1.4v1.4h-1.4zM493.04 354.23h1.4v1.4h-1.4zM494.76 354.23h1.4v1.4h-1.4zM496.48 354.23h1.4v1.4h-1.4zM489.60 355.75h1.4v1.4h-1.4zM491.32 355.75h1.4v1.4h-1.4zM493.04 355.75h1.4v1.4h-1.4zM494.76 355.75h1.4v1.4h-1.4zM496.48 355.75h1.4v1.4h-1.4zM489.60 357.27h1.4v1.4h-1.4zM491.32 357.27h1.4v1.4h-1.4zM493.04 357.27h1.4v1.4h-1.4zM494.76 357.27h1.4v1.4h-1.4zM496.48 357.27h1.4v1.4h-1.4zM489.60 358.79h1.4v1.4h-1.4zM491.32 358.79h1.4v1.4h-1.4zM493.04 358.79h1.4v1.4h-1.4zM494.76 358.79h1.4v1.4h-1.4zM496.48 358.79h1.4v1.4h-1.4zM489.60 360.31h1.4v1.4h-1.4zM491.32 360.31h1.4v1.4h-1.4zM493.04 360.31h1.4v1.4h-1.4zM494.76 360.31h1.4v1.4h-1.4zM496.48 360.31h1.4v1.4h-1.4zM489.60 361.83h1.4v1.4h-1.4zM491.32 361.83h1.4v1.4h-1.4zM493.04 361.83h1.4v1.4h-1.4zM494.76 361.83h1.4v1.4h-1.4zM496.48 361.83h1.4v1.4h-1.4zM489.60 363.35h1.4v1.4h-1.4zM491.32 363.35h1.4v1.4h-1.4zM493.04 363.35h1.4v1.4h-1.4zM494.76 363.35h1.4v1.4h-1.4zM496.48 363.35h1.4v1.4h-1.4zM498.80 354.23h1.4v1.4h-1.4zM500.52 354.23h1.4v1.4h-1.4zM502.24 354.23h1.4v1.4h-1.4zM503.96 354.23h1.4v1.4h-1.4zM505.68 354.23h1.4v1.4h-1.4zM498.80 355.75h1.4v1.4h-1.4zM500.52 355.75h1.4v1.4h-1.4zM502.24 355.75h1.4v1.4h-1.4zM503.96 355.75h1.4v1.4h-1.4zM505.68 355.75h1.4v1.4h-1.4zM498.80 357.27h1.4v1.4h-1.4zM500.52 357.27h1.4v1.4h-1.4zM502.24 357.27h1.4v1.4h-1.4zM503.96 357.27h1.4v1.4h-1.4zM505.68 357.27h1.4v1.4h-1.4zM498.80 358.79h1.4v1.4h-1.4zM500.52 358.79h1.4v1.4h-1.4zM502.24 358.79h1.4v1.4h-1.4zM503.96 358.79h1.4v1.4h-1.4zM505.68 358.79h1.4v1.4h-1.4zM498.80 360.31h1.4v1.4h-1.4zM500.52 360.31h1.4v1.4h-1.4zM502.24 360.31h1.4v1.4h-1.4zM503.96 360.31h1.4v1.4h-1.4zM505.68 360.31h1.4v1.4h-1.4zM498.80 361.83h1.4v1.4h-1.4zM500.52 361.83h1.4v1.4h-1.4zM502.24 361.83h1.4v1.4h-1.4zM503.96 361.83h1.4v1.4h-1.4zM505.68 361.83h1.4v1.4h-1.4zM498.80 363.35h1.4v1.4h-1.4zM500.52 363.35h1.4v1.4h-1.4zM502.24 363.35h1.4v1.4h-1.4zM503.96 363.35h1.4v1.4h-1.4zM505.68 363.35h1.4v1.4h-1.4zM508.00 354.23h1.4v1.4h-1.4zM514.88 354.23h1.4v1.4h-1.4zM509.72 355.75h1.4v1.4h-1.4zM511.44 355.75h1.4v1.4h-1.4zM513.16 355.75h1.4v1.4h-1.4zM509.72 357.27h1.4v1.4h-1.4zM511.44 357.27h1.4v1.4h-1.4zM509.72 358.79h1.4v1.4h-1.4zM513.16 358.79h1.4v1.4h-1.4zM511.44 360.31h1.4v1.4h-1.4zM513.16 360.31h1.4v1.4h-1.4zM509.72 361.83h1.4v1.4h-1.4zM511.44 361.83h1.4v1.4h-1.4zM513.16 361.83h1.4v1.4h-1.4zM508.00 363.35h1.4v1.4h-1.4zM514.88 363.35h1.4v1.4h-1.4z" fill="#26260f"/>
<path d="M509.72 354.23h1.4v1.4h-1.4zM511.44 354.23h1.4v1.4h-1.4zM513.16 354.23h1.4v1.4h-1.4zM508.00 355.75h1.4v1.4h-1.4zM514.88 355.75h1.4v1.4h-1.4zM508.00 357.27h1.4v1.4h-1.4zM513.16 357.27h1.4v1.4h-1.4zM514.88 357.27h1.4v1.4h-1.4zM508.00 358.79h1.4v1.4h-1.4zM511.44 358.79h1.4v1.4h-1.4zM514.88 358.79h1.4v1.4h-1.4zM508.00 360.31h1.4v1.4h-1.4zM509.72 360.31h1.4v1.4h-1.4zM514.88 360.31h1.4v1.4h-1.4zM508.00 361.83h1.4v1.4h-1.4zM514.88 361.83h1.4v1.4h-1.4zM509.72 363.35h1.4v1.4h-1.4zM511.44 363.35h1.4v1.4h-1.4zM513.16 363.35h1.4v1.4h-1.4z" fill="#c8c464"/>
<rect x="529" y="352.6" width="49" height="13.7" fill="#000"/>
<rect x="530" y="353.6" width="47" height="11.7" fill="#0b0b05"/>
<path d="M531.60 354.23h1.4v1.4h-1.4zM533.32 354.23h1.4v1.4h-1.4zM535.04 354.23h1.4v1.4h-1.4zM536.76 354.23h1.4v1.4h-1.4zM538.48 354.23h1.4v1.4h-1.4zM531.60 355.75h1.4v1.4h-1.4zM533.32 355.75h1.4v1.4h-1.4zM535.04 355.75h1.4v1.4h-1.4zM536.76 355.75h1.4v1.4h-1.4zM538.48 355.75h1.4v1.4h-1.4zM531.60 357.27h1.4v1.4h-1.4zM533.32 357.27h1.4v1.4h-1.4zM535.04 357.27h1.4v1.4h-1.4zM536.76 357.27h1.4v1.4h-1.4zM538.48 357.27h1.4v1.4h-1.4zM531.60 358.79h1.4v1.4h-1.4zM533.32 358.79h1.4v1.4h-1.4zM535.04 358.79h1.4v1.4h-1.4zM536.76 358.79h1.4v1.4h-1.4zM538.48 358.79h1.4v1.4h-1.4zM531.60 360.31h1.4v1.4h-1.4zM533.32 360.31h1.4v1.4h-1.4zM535.04 360.31h1.4v1.4h-1.4zM536.76 360.31h1.4v1.4h-1.4zM538.48 360.31h1.4v1.4h-1.4zM531.60 361.83h1.4v1.4h-1.4zM533.32 361.83h1.4v1.4h-1.4zM535.04 361.83h1.4v1.4h-1.4zM536.76 361.83h1.4v1.4h-1.4zM538.48 361.83h1.4v1.4h-1.4zM531.60 363.35h1.4v1.4h-1.4zM533.32 363.35h1.4v1.4h-1.4zM535.04 363.35h1.4v1.4h-1.4zM536.76 363.35h1.4v1.4h-1.4zM538.48 363.35h1.4v1.4h-1.4zM540.80 354.23h1.4v1.4h-1.4zM542.52 354.23h1.4v1.4h-1.4zM544.24 354.23h1.4v1.4h-1.4zM545.96 354.23h1.4v1.4h-1.4zM547.68 354.23h1.4v1.4h-1.4zM540.80 355.75h1.4v1.4h-1.4zM542.52 355.75h1.4v1.4h-1.4zM544.24 355.75h1.4v1.4h-1.4zM545.96 355.75h1.4v1.4h-1.4zM547.68 355.75h1.4v1.4h-1.4zM540.80 357.27h1.4v1.4h-1.4zM542.52 357.27h1.4v1.4h-1.4zM544.24 357.27h1.4v1.4h-1.4zM545.96 357.27h1.4v1.4h-1.4zM547.68 357.27h1.4v1.4h-1.4zM540.80 358.79h1.4v1.4h-1.4zM542.52 358.79h1.4v1.4h-1.4zM544.24 358.79h1.4v1.4h-1.4zM545.96 358.79h1.4v1.4h-1.4zM547.68 358.79h1.4v1.4h-1.4zM540.80 360.31h1.4v1.4h-1.4zM542.52 360.31h1.4v1.4h-1.4zM544.24 360.31h1.4v1.4h-1.4zM545.96 360.31h1.4v1.4h-1.4zM547.68 360.31h1.4v1.4h-1.4zM540.80 361.83h1.4v1.4h-1.4zM542.52 361.83h1.4v1.4h-1.4zM544.24 361.83h1.4v1.4h-1.4zM545.96 361.83h1.4v1.4h-1.4zM547.68 361.83h1.4v1.4h-1.4zM540.80 363.35h1.4v1.4h-1.4zM542.52 363.35h1.4v1.4h-1.4zM544.24 363.35h1.4v1.4h-1.4zM545.96 363.35h1.4v1.4h-1.4zM547.68 363.35h1.4v1.4h-1.4zM550.00 354.23h1.4v1.4h-1.4zM556.88 354.23h1.4v1.4h-1.4zM551.72 355.75h1.4v1.4h-1.4zM553.44 355.75h1.4v1.4h-1.4zM555.16 355.75h1.4v1.4h-1.4zM551.72 357.27h1.4v1.4h-1.4zM553.44 357.27h1.4v1.4h-1.4zM551.72 358.79h1.4v1.4h-1.4zM555.16 358.79h1.4v1.4h-1.4zM553.44 360.31h1.4v1.4h-1.4zM555.16 360.31h1.4v1.4h-1.4zM551.72 361.83h1.4v1.4h-1.4zM553.44 361.83h1.4v1.4h-1.4zM555.16 361.83h1.4v1.4h-1.4zM550.00 363.35h1.4v1.4h-1.4zM556.88 363.35h1.4v1.4h-1.4zM559.20 354.23h1.4v1.4h-1.4zM560.92 354.23h1.4v1.4h-1.4zM562.64 354.23h1.4v1.4h-1.4zM564.36 354.23h1.4v1.4h-1.4zM566.08 354.23h1.4v1.4h-1.4zM559.20 355.75h1.4v1.4h-1.4zM560.92 355.75h1.4v1.4h-1.4zM562.64 355.75h1.4v1.4h-1.4zM564.36 355.75h1.4v1.4h-1.4zM566.08 355.75h1.4v1.4h-1.4zM559.20 357.27h1.4v1.4h-1.4zM560.92 357.27h1.4v1.4h-1.4zM562.64 357.27h1.4v1.4h-1.4zM564.36 357.27h1.4v1.4h-1.4zM566.08 357.27h1.4v1.4h-1.4zM559.20 358.79h1.4v1.4h-1.4zM560.92 358.79h1.4v1.4h-1.4zM562.64 358.79h1.4v1.4h-1.4zM564.36 358.79h1.4v1.4h-1.4zM566.08 358.79h1.4v1.4h-1.4zM559.20 360.31h1.4v1.4h-1.4zM560.92 360.31h1.4v1.4h-1.4zM562.64 360.31h1.4v1.4h-1.4zM564.36 360.31h1.4v1.4h-1.4zM566.08 360.31h1.4v1.4h-1.4zM559.20 361.83h1.4v1.4h-1.4zM562.64 361.83h1.4v1.4h-1.4zM564.36 361.83h1.4v1.4h-1.4zM566.08 361.83h1.4v1.4h-1.4zM560.92 363.35h1.4v1.4h-1.4zM562.64 363.35h1.4v1.4h-1.4zM564.36 363.35h1.4v1.4h-1.4zM566.08 363.35h1.4v1.4h-1.4zM568.40 354.23h1.4v1.4h-1.4zM575.28 354.23h1.4v1.4h-1.4zM570.12 355.75h1.4v1.4h-1.4zM571.84 355.75h1.4v1.4h-1.4zM573.56 355.75h1.4v1.4h-1.4zM570.12 357.27h1.4v1.4h-1.4zM571.84 357.27h1.4v1.4h-1.4zM570.12 358.79h1.4v1.4h-1.4zM573.56 358.79h1.4v1.4h-1.4zM571.84 360.31h1.4v1.4h-1.4zM573.56 360.31h1.4v1.4h-1.4zM570.12 361.83h1.4v1.4h-1.4zM571.84 361.83h1.4v1.4h-1.4zM573.56 361.83h1.4v1.4h-1.4zM568.40 363.35h1.4v1.4h-1.4zM575.28 363.35h1.4v1.4h-1.4z" fill="#26260f"/>
<path d="M551.72 354.23h1.4v1.4h-1.4zM553.44 354.23h1.4v1.4h-1.4zM555.16 354.23h1.4v1.4h-1.4zM550.00 355.75h1.4v1.4h-1.4zM556.88 355.75h1.4v1.4h-1.4zM550.00 357.27h1.4v1.4h-1.4zM555.16 357.27h1.4v1.4h-1.4zM556.88 357.27h1.4v1.4h-1.4zM550.00 358.79h1.4v1.4h-1.4zM553.44 358.79h1.4v1.4h-1.4zM556.88 358.79h1.4v1.4h-1.4zM550.00 360.31h1.4v1.4h-1.4zM551.72 360.31h1.4v1.4h-1.4zM556.88 360.31h1.4v1.4h-1.4zM550.00 361.83h1.4v1.4h-1.4zM556.88 361.83h1.4v1.4h-1.4zM551.72 363.35h1.4v1.4h-1.4zM553.44 363.35h1.4v1.4h-1.4zM555.16 363.35h1.4v1.4h-1.4zM560.92 361.83h1.4v1.4h-1.4zM559.20 363.35h1.4v1.4h-1.4zM570.12 354.23h1.4v1.4h-1.4zM571.84 354.23h1.4v1.4h-1.4zM573.56 354.23h1.4v1.4h-1.4zM568.40 355.75h1.4v1.4h-1.4zM575.28 355.75h1.4v1.4h-1.4zM568.40 357.27h1.4v1.4h-1.4zM573.56 357.27h1.4v1.4h-1.4zM575.28 357.27h1.4v1.4h-1.4zM568.40 358.79h1.4v1.4h-1.4zM571.84 358.79h1.4v1.4h-1.4zM575.28 358.79h1.4v1.4h-1.4zM568.40 360.31h1.4v1.4h-1.4zM570.12 360.31h1.4v1.4h-1.4zM575.28 360.31h1.4v1.4h-1.4zM568.40 361.83h1.4v1.4h-1.4zM575.28 361.83h1.4v1.4h-1.4zM570.12 363.35h1.4v1.4h-1.4zM571.84 363.35h1.4v1.4h-1.4zM573.56 363.35h1.4v1.4h-1.4z" fill="#c8c464"/>
<rect x="478" y="379.4" width="111" height="21.2" fill="#0b2a86"/>
<rect x="538" y="383" width="49" height="15.6" fill="#fff"/>
<text x="483.3" y="396.6" font-family='"Liberation Sans", sans-serif' font-weight="bold" font-size="14.8" fill="#fff" stroke="#fff" stroke-width="1.3" stroke-linejoin="round" textLength="50.4" lengthAdjust="spacingAndGlyphs">TERM</text>
<rect x="535" y="392.4" width="2.6" height="3" fill="#fff"/>
<text x="541.3" y="396.6" font-family='"Liberation Sans", sans-serif' font-weight="bold" font-size="14.8" fill="#0b2a86" stroke="#0b2a86" stroke-width="1.3" stroke-linejoin="round" textLength="39.4" lengthAdjust="spacingAndGlyphs">LAB</text>
<circle cx="584.5" cy="385.5" r="1.3" fill="#0b2a86"/>
<rect x="2" y="406.5" width="595" height="11.5" fill="#ECE9D8"/>
<rect x="2" y="406.5" width="595" height="0.8" fill="#fff"/>
<rect x="2" y="417" width="595" height="1" fill="#fafaf6"/>
<text x="4.5" y="415.6" font-family='"Liberation Sans", sans-serif' font-size="6.25" fill="#111" class="t">SPL Mode</text>
<text x="122.6" y="415.6" font-family='"Liberation Sans", sans-serif' font-size="6.25" fill="#111" class="t">Total Competitors: 0</text>
<text x="239" y="415.6" font-family='"Liberation Sans", sans-serif' font-size="6.25" fill="#111" class="t">Leaderboard</text>
<text x="356" y="415.6" font-family='"Liberation Sans", sans-serif' font-size="6.25" fill="#111" class="t">Rate: 0 FFT: 512 BW: 256 Hz</text>
<text x="472.5" y="415.6" font-family='"Liberation Sans", sans-serif' font-size="6.25" fill="#111" class="t">Network:</text>
<rect x="120" y="408.5" width="0.8" height="9" fill="#c2bfae"/>
<rect x="120.8" y="408.5" width="0.6" height="9" fill="#fff"/>
<rect x="237" y="408.5" width="0.8" height="9" fill="#c2bfae"/>
<rect x="237.8" y="408.5" width="0.6" height="9" fill="#fff"/>
<rect x="354" y="408.5" width="0.8" height="9" fill="#c2bfae"/>
<rect x="354.8" y="408.5" width="0.6" height="9" fill="#fff"/>
<rect x="471" y="408.5" width="0.8" height="9" fill="#c2bfae"/>
<rect x="471.8" y="408.5" width="0.6" height="9" fill="#fff"/>
<rect x="586.5" y="408.5" width="0.8" height="9" fill="#c2bfae"/>
<rect x="587.3" y="408.5" width="0.6" height="9" fill="#fff"/>
<rect x="2" y="418" width="595.5" height="16" fill="url(#task)"/>
<path d="M2 418 H78 Q84 418 84 426 Q84 434 78 434 H2 Z" fill="url(#start)"/>
<rect x="10.5" y="422" width="3.5" height="3.5" fill="#f05020"/><rect x="14.5" y="422.5" width="3.5" height="3.5" fill="#50b030"/>
<rect x="10" y="426" width="3.5" height="3.5" fill="#3080f0"/><rect x="14" y="426.5" width="3.5" height="3.5" fill="#f0c020"/>
<text x="22.5" y="429.8" font-family='"Liberation Sans", sans-serif' font-weight="bold" font-style="italic" font-size="9.5" fill="#fff">Käynnistä</text>
<rect x="95" y="422" width="9" height="8" rx="1" fill="#1e3a1e" stroke="#d0d8d0" stroke-width="0.8"/>
<path d="M96.5 427 Q98 424 99.5 426.3 T102.5 425" stroke="#7fff7f" stroke-width="0.8" fill="none"/>
<rect x="182" y="419.5" width="93" height="13.5" rx="2" fill="#1c4fc8" stroke="#1645b0" stroke-width="0.6"/>
<rect x="189" y="422" width="8.5" height="8" rx="1" fill="#1e3a1e" stroke="#d0d8d0" stroke-width="0.8"/>
<path d="M190.5 427 Q192 424 193.5 426.3 T196.5 425" stroke="#7fff7f" stroke-width="0.8" fill="none"/>
<text x="200" y="428.8" font-family='"Liberation Sans", sans-serif' font-size="6.6" fill="#fff">Term-LAB</text>
<rect x="543.4" y="418" width="54.1" height="16" fill="url(#tray)"/>
<rect x="543" y="418" width="0.9" height="16" fill="#0c5cc0"/>
<rect x="550.5" y="422" width="7.5" height="6.5" fill="#e8ecf0" stroke="#404858" stroke-width="0.6"/>
<rect x="552" y="423.3" width="4.5" height="4" fill="#2a6a8a"/>
<rect x="551.5" y="428.5" width="5.5" height="1.6" fill="#c8ccd0"/>
<rect x="560.5" y="422" width="6" height="6" fill="#1a2a6a"/><rect x="563" y="424" width="6" height="6" fill="#d02838"/><rect x="560.5" y="426" width="3" height="4" fill="#e0e0ee"/>
<text x="573.5" y="428.8" font-family='"Liberation Sans", sans-serif' font-size="6.6" fill="#fff">13:57</text>
</svg>
</body></html>
